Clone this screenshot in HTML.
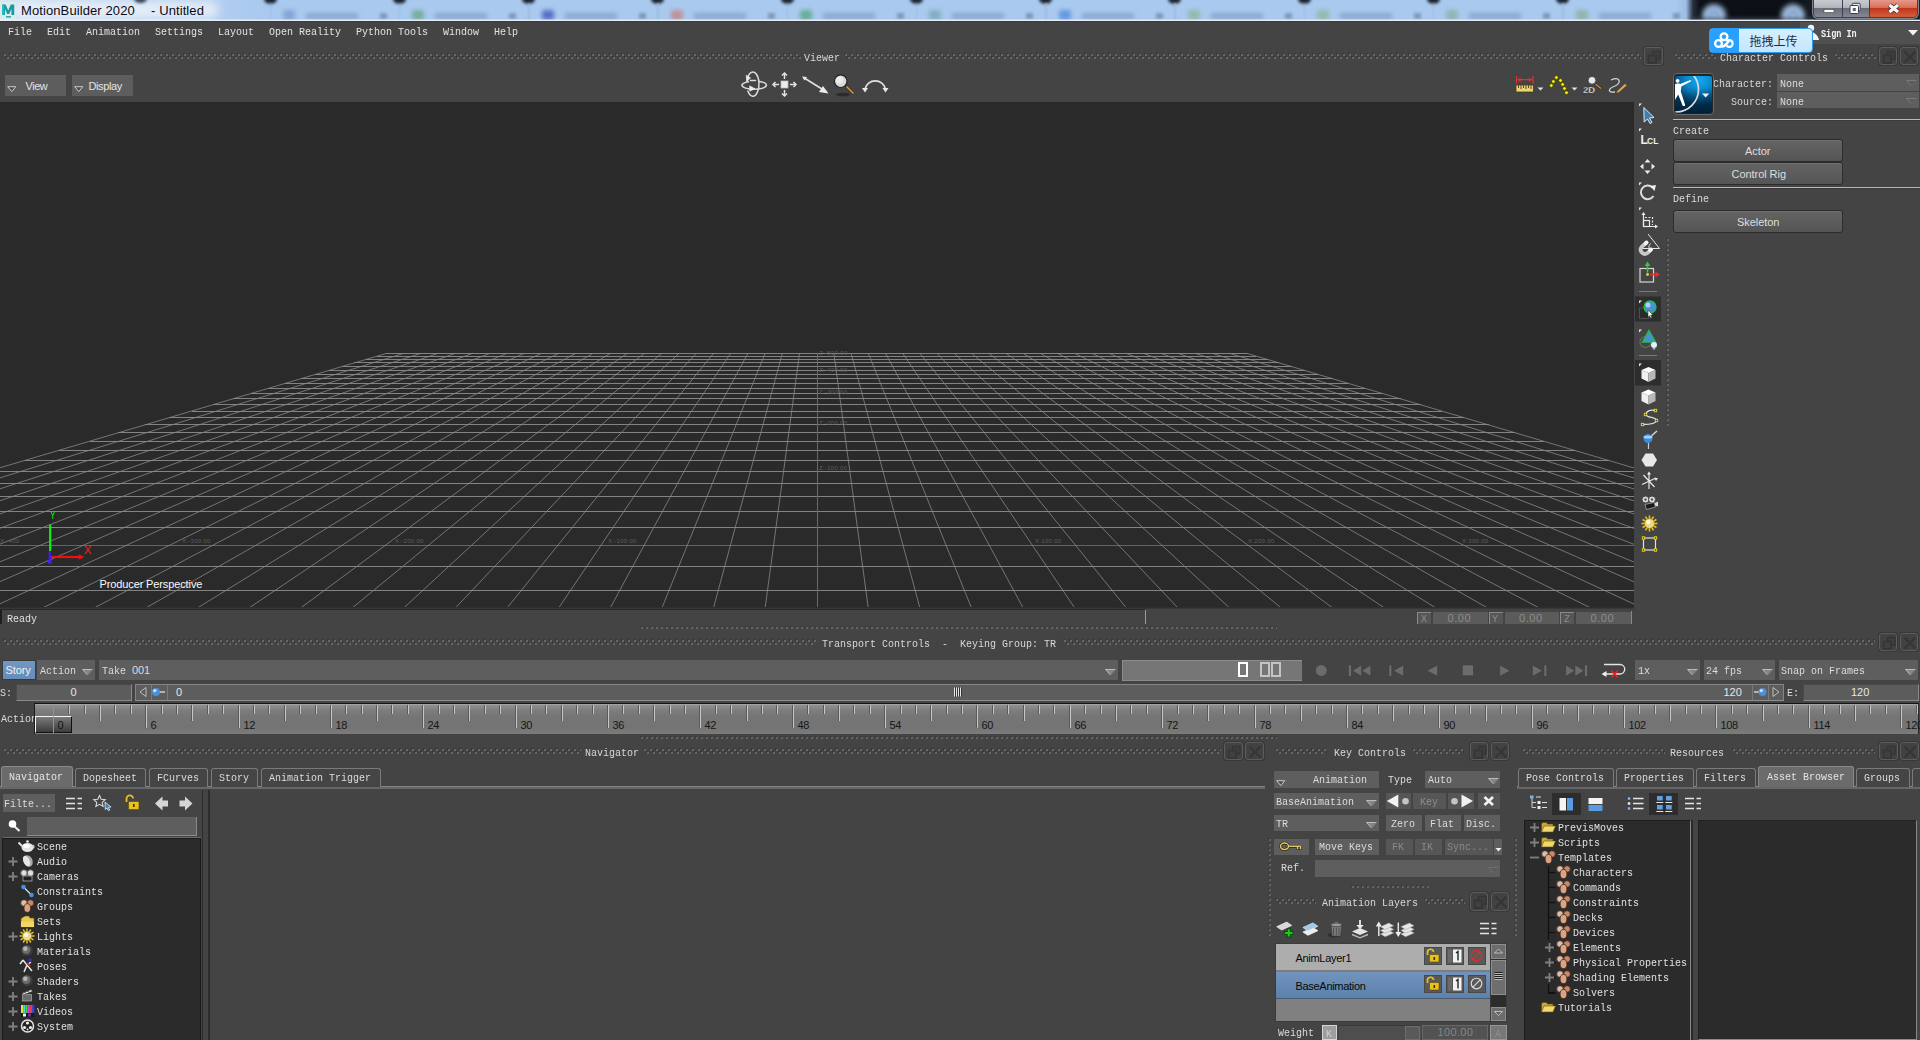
<!DOCTYPE html>
<html lang="en"><head><meta charset="utf-8"><title>MotionBuilder 2020 - Untitled</title>
<style>
html,body{margin:0;padding:0;}
body{width:1920px;height:1040px;overflow:hidden;background:#444;position:relative;font-family:"Liberation Sans","Noto Sans CJK SC",sans-serif;}
#app{position:absolute;left:0;top:0;width:1920px;height:1040px;overflow:hidden;background:#444;}
#app div,#app span,#app svg{position:absolute;box-sizing:border-box;}
.m{font-family:"Liberation Mono",monospace;font-size:11px;line-height:14px;white-space:pre;transform:scaleX(.909);transform-origin:0 0;letter-spacing:0;}
.s{font-family:"Liberation Sans",sans-serif;line-height:14px;white-space:pre;}
.pb{width:18.5px;height:18.5px;border:1px solid #5c5c5c;border-radius:3px;background:#424242;box-shadow:0 0 0 1px #383838;}
.dd{background:#5e5e5e;}
.btn{background:#5e5e5e;}
.fld{background:#5c5c5c;border:1px solid #4a4a4a;border-bottom-color:#8a8a8a;border-right-color:#8a8a8a;}
.tab{border:1px solid #7a7a7a;border-bottom:none;border-radius:3px 3px 0 0;background:#454545;}
.tabA{border:1px solid #8a8a8a;border-bottom:none;border-radius:3px 3px 0 0;background:#6b6b6b;}
.rb{border:1px solid #2c2c2c;border-radius:3px;background:linear-gradient(#646464,#555);box-shadow:inset 0 1px 0 #707070;}
</style></head><body><div id="app">
<svg width="0" height="0" style="left:0;top:0"><defs>
<pattern id="pd" width="6" height="6" patternUnits="userSpaceOnUse"><rect x="0" y="0" width="2" height="2" fill="#373737"/><rect x="1" y="1" width="2" height="2" fill="#676767"/><rect x="3" y="3" width="2" height="2" fill="#373737"/><rect x="4" y="4" width="2" height="2" fill="#676767"/></pattern>
<pattern id="ps" width="5" height="3" patternUnits="userSpaceOnUse"><rect x="0" y="0" width="2" height="2" fill="#393939"/><rect x="1" y="1" width="2" height="2" fill="#646464"/></pattern>
<pattern id="pv" width="3" height="5" patternUnits="userSpaceOnUse"><rect x="0" y="0" width="2" height="2" fill="#393939"/><rect x="1" y="1" width="2" height="2" fill="#646464"/></pattern>
</defs></svg>

<div style="left:0;top:0;width:1920px;height:21px;background:linear-gradient(90deg,#dbe6f3 0,#c4d8ef 40px,#b0cdee 225px,#a9c9ee 260px,#a9c9ee 1676px,#9dbde4 1686px,#27303c 1693px,#0d1116 1700px,#0c1016 1800px,#1c222a 1816px);overflow:hidden">
<div style="left:263.5px;top:-6px;width:13px;height:10px;background:#1c2430;border-radius:50%;filter:blur(1.500px)"></div>
<div style="left:269.5px;top:3px;width:1.500px;height:17px;background:#9dbbe0;filter:blur(.800px)"></div>
<div style="left:283px;top:10px;width:12px;height:10px;background:#7f9fd0;border-radius:3px;filter:blur(2px);opacity:.85"></div>
<div style="left:306px;top:12.500px;width:52px;height:6px;background:#86a3c8;filter:blur(2.200px);opacity:.85"></div>
<div style="left:380px;top:12.500px;width:7px;height:6px;background:#7891b4;filter:blur(1.800px);opacity:.85"></div>
<div style="left:392.75px;top:-6px;width:13px;height:10px;background:#1c2430;border-radius:50%;filter:blur(1.500px)"></div>
<div style="left:398.75px;top:3px;width:1.500px;height:17px;background:#9dbbe0;filter:blur(.800px)"></div>
<div style="left:412.25px;top:10px;width:12px;height:10px;background:#6fa890;border-radius:3px;filter:blur(2px);opacity:.85"></div>
<div style="left:435.25px;top:12.500px;width:52px;height:6px;background:#86a3c8;filter:blur(2.200px);opacity:.85"></div>
<div style="left:509.25px;top:12.500px;width:7px;height:6px;background:#7891b4;filter:blur(1.800px);opacity:.85"></div>
<div style="left:522px;top:-6px;width:13px;height:10px;background:#1c2430;border-radius:50%;filter:blur(1.500px)"></div>
<div style="left:528px;top:3px;width:1.500px;height:17px;background:#9dbbe0;filter:blur(.800px)"></div>
<div style="left:541.5px;top:10px;width:12px;height:10px;background:#4a60c0;border-radius:3px;filter:blur(2px);opacity:.85"></div>
<div style="left:564.5px;top:12.500px;width:52px;height:6px;background:#86a3c8;filter:blur(2.200px);opacity:.85"></div>
<div style="left:638.5px;top:12.500px;width:7px;height:6px;background:#7891b4;filter:blur(1.800px);opacity:.85"></div>
<div style="left:651.25px;top:-6px;width:13px;height:10px;background:#1c2430;border-radius:50%;filter:blur(1.500px)"></div>
<div style="left:657.25px;top:3px;width:1.500px;height:17px;background:#9dbbe0;filter:blur(.800px)"></div>
<div style="left:670.75px;top:10px;width:12px;height:10px;background:#c08888;border-radius:3px;filter:blur(2px);opacity:.85"></div>
<div style="left:693.75px;top:12.500px;width:52px;height:6px;background:#86a3c8;filter:blur(2.200px);opacity:.85"></div>
<div style="left:767.75px;top:12.500px;width:7px;height:6px;background:#7891b4;filter:blur(1.800px);opacity:.85"></div>
<div style="left:780.5px;top:-6px;width:13px;height:10px;background:#1c2430;border-radius:50%;filter:blur(1.500px)"></div>
<div style="left:786.5px;top:3px;width:1.500px;height:17px;background:#9dbbe0;filter:blur(.800px)"></div>
<div style="left:800px;top:10px;width:12px;height:10px;background:#5fa888;border-radius:3px;filter:blur(2px);opacity:.85"></div>
<div style="left:823px;top:12.500px;width:52px;height:6px;background:#86a3c8;filter:blur(2.200px);opacity:.85"></div>
<div style="left:897px;top:12.500px;width:7px;height:6px;background:#7891b4;filter:blur(1.800px);opacity:.85"></div>
<div style="left:909.75px;top:-6px;width:13px;height:10px;background:#1c2430;border-radius:50%;filter:blur(1.500px)"></div>
<div style="left:915.75px;top:3px;width:1.500px;height:17px;background:#9dbbe0;filter:blur(.800px)"></div>
<div style="left:929.25px;top:10px;width:12px;height:10px;background:#7fa8b8;border-radius:3px;filter:blur(2px);opacity:.85"></div>
<div style="left:952.25px;top:12.500px;width:52px;height:6px;background:#86a3c8;filter:blur(2.200px);opacity:.85"></div>
<div style="left:1026.25px;top:12.500px;width:7px;height:6px;background:#7891b4;filter:blur(1.800px);opacity:.85"></div>
<div style="left:1039px;top:-6px;width:13px;height:10px;background:#1c2430;border-radius:50%;filter:blur(1.500px)"></div>
<div style="left:1045px;top:3px;width:1.500px;height:17px;background:#9dbbe0;filter:blur(.800px)"></div>
<div style="left:1058.5px;top:10px;width:12px;height:10px;background:#5a8fe0;border-radius:3px;filter:blur(2px);opacity:.85"></div>
<div style="left:1081.5px;top:12.500px;width:52px;height:6px;background:#86a3c8;filter:blur(2.200px);opacity:.85"></div>
<div style="left:1155.5px;top:12.500px;width:7px;height:6px;background:#7891b4;filter:blur(1.800px);opacity:.85"></div>
<div style="left:1168.25px;top:-6px;width:13px;height:10px;background:#1c2430;border-radius:50%;filter:blur(1.500px)"></div>
<div style="left:1174.25px;top:3px;width:1.500px;height:17px;background:#9dbbe0;filter:blur(.800px)"></div>
<div style="left:1187.75px;top:10px;width:12px;height:10px;background:#8fb8a0;border-radius:3px;filter:blur(2px);opacity:.85"></div>
<div style="left:1210.75px;top:12.500px;width:52px;height:6px;background:#86a3c8;filter:blur(2.200px);opacity:.85"></div>
<div style="left:1284.75px;top:12.500px;width:7px;height:6px;background:#7891b4;filter:blur(1.800px);opacity:.85"></div>
<div style="left:1297.5px;top:-6px;width:13px;height:10px;background:#1c2430;border-radius:50%;filter:blur(1.500px)"></div>
<div style="left:1303.5px;top:3px;width:1.500px;height:17px;background:#9dbbe0;filter:blur(.800px)"></div>
<div style="left:1317px;top:10px;width:12px;height:10px;background:#90b8a0;border-radius:3px;filter:blur(2px);opacity:.85"></div>
<div style="left:1340px;top:12.500px;width:52px;height:6px;background:#86a3c8;filter:blur(2.200px);opacity:.85"></div>
<div style="left:1414px;top:12.500px;width:7px;height:6px;background:#7891b4;filter:blur(1.800px);opacity:.85"></div>
<div style="left:1426.75px;top:-6px;width:13px;height:10px;background:#1c2430;border-radius:50%;filter:blur(1.500px)"></div>
<div style="left:1432.75px;top:3px;width:1.500px;height:17px;background:#9dbbe0;filter:blur(.800px)"></div>
<div style="left:1446.25px;top:10px;width:12px;height:10px;background:#90b0a8;border-radius:3px;filter:blur(2px);opacity:.85"></div>
<div style="left:1469.25px;top:12.500px;width:52px;height:6px;background:#86a3c8;filter:blur(2.200px);opacity:.85"></div>
<div style="left:1543.25px;top:12.500px;width:7px;height:6px;background:#7891b4;filter:blur(1.800px);opacity:.85"></div>
<div style="left:1556px;top:-6px;width:13px;height:10px;background:#1c2430;border-radius:50%;filter:blur(1.500px)"></div>
<div style="left:1562px;top:3px;width:1.500px;height:17px;background:#9dbbe0;filter:blur(.800px)"></div>
<div style="left:1575.5px;top:10px;width:12px;height:10px;background:#8fb0a0;border-radius:3px;filter:blur(2px);opacity:.85"></div>
<div style="left:1598.5px;top:12.500px;width:52px;height:6px;background:#86a3c8;filter:blur(2.200px);opacity:.85"></div>
<div style="left:1672.5px;top:12.500px;width:7px;height:6px;background:#7891b4;filter:blur(1.800px);opacity:.85"></div>
<div style="left:14px;top:1px;width:205px;height:18px;background:#f4f7fc;border-radius:9px;filter:blur(5px);opacity:.72"></div>
<div style="left:134px;top:-6px;width:13px;height:9px;background:#3a4658;border-radius:50%;filter:blur(1.500px)"></div>
<div style="left:1702px;top:4px;width:24px;height:24px;background:#a4c4e8;border-radius:50%;filter:blur(2.500px);opacity:.92"></div>
<div style="left:1709px;top:11px;width:10px;height:10px;border:2px solid #7898c0;border-radius:50%;filter:blur(1.500px);opacity:.7"></div>
<div style="left:1780.500px;top:4px;width:24px;height:24px;background:#a4c4e8;border-radius:50%;filter:blur(2.500px);opacity:.92"></div>
<div style="left:1787.500px;top:11px;width:10px;height:10px;border:2px solid #7898c0;border-radius:50%;filter:blur(1.500px);opacity:.7"></div>
<div style="left:1690px;top:15px;width:124px;height:6px;background:linear-gradient(rgba(60,70,84,0),rgba(70,80,96,.7));"></div>
</div>
<div style="left:0px;top:19px;width:1920px;height:1px;background:rgba(255,255,255,.35);"></div>
<div style="left:0px;top:20px;width:1920px;height:1px;background:#e6eef8;"></div>
<div style="left:0px;top:21px;width:1920px;height:1px;background:#3a3a3a;"></div>
<svg style="left:0;top:2px" width="17" height="18" viewBox="0 0 17 18"><rect x="0" y="0" width="16" height="17" fill="#d9ecee"/><path d="M2.2 13V2.5H5.6L8.2 8.5L10.8 2.5H14.2V13H11.4V7L9.2 12H7.2L5 7V13Z" fill="#1b9aa2"/><path d="M2.2 13V2.5H4V13Z" fill="#2bbcc0"/><rect x="6" y="14" width="5" height="1.6" fill="#3aa7ad"/></svg>
<span class="s" style="left:21px;top:3.7px;color:#0a0a14;font-size:13px;letter-spacing:0.1px">MotionBuilder 2020</span>
<span class="s" style="left:151px;top:3.7px;color:#0a0a14;font-size:13px;letter-spacing:0.1px">- Untitled</span>
<div style="left:1813px;top:-3px;width:105px;height:21px;border:1px solid #39414c;border-radius:0 0 5px 5px;background:#566070;box-shadow:0 0 0 1px rgba(255,255,255,.45);overflow:hidden">
<div style="left:0;top:0;width:28px;height:21px;background:linear-gradient(#cdd1d6 0,#b2b7be 45%,#686e7a 50%,#8c8e9a 100%)"></div>
<div style="left:28px;top:0;width:1px;height:21px;background:#3b424c"></div>
<div style="left:29px;top:0;width:26px;height:21px;background:linear-gradient(#cdd1d6 0,#b2b7be 45%,#686e7a 50%,#8c8e9a 100%)"></div>
<div style="left:55px;top:0;width:1px;height:21px;background:#3b424c"></div>
<div style="left:56px;top:0;width:48px;height:21px;background:linear-gradient(#e8a596 0,#d8705c 45%,#c2371c 50%,#d25a3a 85%,#c8603f 100%)"></div>
</div>
<svg style="left:1813px;top:0" width="106" height="18" viewBox="0 0 106 18"><rect x="11" y="9.5" width="10" height="3" fill="#fff" stroke="#444" stroke-width=".6"/><rect x="39.200" y="3.300" width="8" height="7.500" rx="1" fill="#e8e8ec" stroke="#3a3f4c" stroke-width="1"/><rect x="37" y="5.500" width="8.500" height="8" rx="1" fill="#fafafa" stroke="#3a3f4c" stroke-width="1"/><rect x="39.800" y="8" width="3" height="3" fill="#5a6070"/><path d="M76.500 5L85 12M85 5L76.500 12" stroke="#3a2a30" stroke-width="4.800"/><path d="M76.500 5L85 12M85 5L76.500 12" stroke="#f6f6f6" stroke-width="3.200"/></svg>
<span class="m" style="left:7.7px;top:25px;color:#e2e2e2;">File</span>
<span class="m" style="left:46.7px;top:25px;color:#e2e2e2;">Edit</span>
<span class="m" style="left:85.7px;top:25px;color:#e2e2e2;">Animation</span>
<span class="m" style="left:154.7px;top:25px;color:#e2e2e2;">Settings</span>
<span class="m" style="left:217.7px;top:25px;color:#e2e2e2;">Layout</span>
<span class="m" style="left:268.7px;top:25px;color:#e2e2e2;">Open Reality</span>
<span class="m" style="left:355.7px;top:25px;color:#e2e2e2;">Python Tools</span>
<span class="m" style="left:442.7px;top:25px;color:#e2e2e2;">Window</span>
<span class="m" style="left:493.7px;top:25px;color:#e2e2e2;">Help</span>
<div style="left:1800px;top:22px;width:120px;height:22px;background:#505050;"></div>
<svg style="left:1806px;top:24px" width="14" height="18" viewBox="0 0 14 18"><circle cx="5" cy="4" r="3.2" fill="#f2f2f2"/><path d="M0 16C0 10 2 8 5 8C8 8 12 11 13 16Z" fill="#f2f2f2"/></svg>
<span class="m" style="left:1820.7px;top:27.5px;color:#f4f4f4;font-weight:bold;font-size:10px;transform:scaleX(.85)">Sign In</span>
<svg style="left:1908px;top:30px" width="10" height="6" viewBox="0 0 10 6"><path d="M0 0H10L5 5.5Z" fill="#f4f4f4"/></svg>
<svg style="left:3px;top:53px" width="799" height="6"><rect width="100%" height="6" fill="url(#pd)"/></svg>
<span class="m" style="left:803.7px;top:51px;color:#d8d8d8;">Viewer</span>
<svg style="left:844px;top:53px" width="797" height="6"><rect width="100%" height="6" fill="url(#pd)"/></svg>
<div class="pb" style="left:1644px;top:46.5px"><svg width="18" height="18" viewBox="0 0 18 18"><rect x="7.500" y="3.500" width="7.500" height="7.500" fill="#3e3e3e" stroke="#363636" stroke-width="1.600"/><rect x="3.500" y="7.500" width="7.500" height="7.500" fill="#404040" stroke="#363636" stroke-width="1.800"/></svg></div>
<div style="left:5px;top:75px;width:61px;height:21px;background:#5d5d5d;"></div>
<div style="left:72px;top:75px;width:61px;height:21px;background:#5d5d5d;"></div>
<svg style="left:7px;top:86.2px" width="10" height="7" viewBox="0 0 10 7"><path d="M0.700 0.700H8.800L4.750 5.600Z" fill="#505050" stroke="#cacaca" stroke-width="1"/></svg>
<svg style="left:74px;top:86.2px" width="10" height="7" viewBox="0 0 10 7"><path d="M0.700 0.700H8.800L4.750 5.600Z" fill="#505050" stroke="#cacaca" stroke-width="1"/></svg>
<span class="s" style="left:25.5px;top:79.36px;color:#e4e4e4;font-size:11px;letter-spacing:-0.45px">View</span>
<span class="s" style="left:88.5px;top:79.36px;color:#e4e4e4;font-size:11px;letter-spacing:-0.4px">Display</span>
<div style="left:0;top:102px;width:1634px;height:505px;background:#2a2a2a;overflow:hidden">
<svg style="left:0;top:0" width="1634" height="505" viewBox="0 102 1634 505" shape-rendering="crispEdges"><g stroke="#838383" stroke-width="1" fill="none"><path d="M386.0 353.5H1247.4"/><path d="M377.0 356.5H1256.4"/><path d="M365.8 359.5H1267.6"/><path d="M354.1 362.5H1279.3"/><path d="M341.8 366.5H1291.6"/><path d="M328.8 370.5H1304.6"/><path d="M315.0 374.5H1318.4"/><path d="M300.5 378.5H1332.9"/><path d="M285.1 383.5H1348.3"/><path d="M268.7 388.5H1364.7"/><path d="M251.3 393.5H1382.1"/><path d="M232.7 398.5H1400.7"/><path d="M212.9 404.5H1420.5"/><path d="M191.7 411.5H1441.7"/><path d="M169.0 417.5H1464.4"/><path d="M144.5 424.5H1488.9"/><path d="M118.1 432.5H1515.3"/><path d="M89.6 441.5H1543.8"/><path d="M58.6 450.5H1574.8"/><path d="M24.8 460.5H1608.6"/><path d="M-12.1 471.5H1645.5"/><path d="M-52.6 483.5H1686.0"/><path d="M-97.3 496.5H1730.7"/><path d="M-146.8 511.5H1780.2"/><path d="M-202.0 527.5H1835.4"/><path d="M-263.9 545.5H1897.3" stroke="#646464"/><path d="M-333.9 566.5H1967.3"/><path d="M-413.5 590.5H2046.9"/><path d="M386.7 353.3L-784.4 700.0" shape-rendering="geometricPrecision" stroke="#8a8a8a" stroke-width=".78"/><path d="M403.9 353.3L-720.4 700.0" shape-rendering="geometricPrecision" stroke="#8a8a8a" stroke-width=".78"/><path d="M421.1 353.3L-656.3 700.0" shape-rendering="geometricPrecision" stroke="#8a8a8a" stroke-width=".78"/><path d="M438.3 353.3L-592.3 700.0" shape-rendering="geometricPrecision" stroke="#8a8a8a" stroke-width=".78"/><path d="M455.5 353.3L-528.2 700.0" shape-rendering="geometricPrecision" stroke="#8a8a8a" stroke-width=".78"/><path d="M472.7 353.3L-464.2 700.0" shape-rendering="geometricPrecision" stroke="#8a8a8a" stroke-width=".78"/><path d="M489.9 353.3L-400.1 700.0" shape-rendering="geometricPrecision" stroke="#8a8a8a" stroke-width=".78"/><path d="M507.1 353.3L-336.1 700.0" shape-rendering="geometricPrecision" stroke="#8a8a8a" stroke-width=".78"/><path d="M524.3 353.3L-272.0 700.0" shape-rendering="geometricPrecision" stroke="#8a8a8a" stroke-width=".78"/><path d="M541.5 353.3L-208.0 700.0" shape-rendering="geometricPrecision" stroke="#8a8a8a" stroke-width=".78"/><path d="M558.7 353.3L-144.0 700.0" shape-rendering="geometricPrecision" stroke="#8a8a8a" stroke-width=".78"/><path d="M575.9 353.3L-79.9 700.0" shape-rendering="geometricPrecision" stroke="#8a8a8a" stroke-width=".78"/><path d="M593.1 353.3L-15.9 700.0" shape-rendering="geometricPrecision" stroke="#8a8a8a" stroke-width=".78"/><path d="M610.3 353.3L48.2 700.0" shape-rendering="geometricPrecision" stroke="#8a8a8a" stroke-width=".78"/><path d="M627.5 353.3L112.2 700.0" shape-rendering="geometricPrecision" stroke="#8a8a8a" stroke-width=".78"/><path d="M644.7 353.3L176.3 700.0" shape-rendering="geometricPrecision" stroke="#8a8a8a" stroke-width=".78"/><path d="M661.9 353.3L240.3 700.0" shape-rendering="geometricPrecision" stroke="#8a8a8a" stroke-width=".78"/><path d="M679.1 353.3L304.3 700.0" shape-rendering="geometricPrecision" stroke="#8a8a8a" stroke-width=".78"/><path d="M696.3 353.3L368.4 700.0" shape-rendering="geometricPrecision" stroke="#8a8a8a" stroke-width=".78"/><path d="M713.5 353.3L432.4 700.0" shape-rendering="geometricPrecision" stroke="#8a8a8a" stroke-width=".78"/><path d="M730.7 353.3L496.5 700.0" shape-rendering="geometricPrecision" stroke="#8a8a8a" stroke-width=".78"/><path d="M747.9 353.3L560.5 700.0" shape-rendering="geometricPrecision" stroke="#8a8a8a" stroke-width=".78"/><path d="M765.1 353.3L624.6 700.0" shape-rendering="geometricPrecision" stroke="#8a8a8a" stroke-width=".78"/><path d="M782.3 353.3L688.6 700.0" shape-rendering="geometricPrecision" stroke="#8a8a8a" stroke-width=".78"/><path d="M799.5 353.3L752.7 700.0" shape-rendering="geometricPrecision" stroke="#8a8a8a" stroke-width=".78"/><path d="M817.5 353.3L817.5 700.0" stroke="#6a6a6a"/><path d="M833.9 353.3L880.7 700.0" shape-rendering="geometricPrecision" stroke="#8a8a8a" stroke-width=".78"/><path d="M851.1 353.3L944.8 700.0" shape-rendering="geometricPrecision" stroke="#8a8a8a" stroke-width=".78"/><path d="M868.3 353.3L1008.8 700.0" shape-rendering="geometricPrecision" stroke="#8a8a8a" stroke-width=".78"/><path d="M885.5 353.3L1072.9 700.0" shape-rendering="geometricPrecision" stroke="#8a8a8a" stroke-width=".78"/><path d="M902.7 353.3L1136.9 700.0" shape-rendering="geometricPrecision" stroke="#8a8a8a" stroke-width=".78"/><path d="M919.9 353.3L1201.0 700.0" shape-rendering="geometricPrecision" stroke="#8a8a8a" stroke-width=".78"/><path d="M937.1 353.3L1265.0 700.0" shape-rendering="geometricPrecision" stroke="#8a8a8a" stroke-width=".78"/><path d="M954.3 353.3L1329.1 700.0" shape-rendering="geometricPrecision" stroke="#8a8a8a" stroke-width=".78"/><path d="M971.5 353.3L1393.1 700.0" shape-rendering="geometricPrecision" stroke="#8a8a8a" stroke-width=".78"/><path d="M988.7 353.3L1457.1 700.0" shape-rendering="geometricPrecision" stroke="#8a8a8a" stroke-width=".78"/><path d="M1005.9 353.3L1521.2 700.0" shape-rendering="geometricPrecision" stroke="#8a8a8a" stroke-width=".78"/><path d="M1023.1 353.3L1585.2 700.0" shape-rendering="geometricPrecision" stroke="#8a8a8a" stroke-width=".78"/><path d="M1040.3 353.3L1649.3 700.0" shape-rendering="geometricPrecision" stroke="#8a8a8a" stroke-width=".78"/><path d="M1057.5 353.3L1713.3 700.0" shape-rendering="geometricPrecision" stroke="#8a8a8a" stroke-width=".78"/><path d="M1074.7 353.3L1777.4 700.0" shape-rendering="geometricPrecision" stroke="#8a8a8a" stroke-width=".78"/><path d="M1091.9 353.3L1841.4 700.0" shape-rendering="geometricPrecision" stroke="#8a8a8a" stroke-width=".78"/><path d="M1109.1 353.3L1905.4 700.0" shape-rendering="geometricPrecision" stroke="#8a8a8a" stroke-width=".78"/><path d="M1126.3 353.3L1969.5 700.0" shape-rendering="geometricPrecision" stroke="#8a8a8a" stroke-width=".78"/><path d="M1143.5 353.3L2033.5 700.0" shape-rendering="geometricPrecision" stroke="#8a8a8a" stroke-width=".78"/><path d="M1160.7 353.3L2097.6 700.0" shape-rendering="geometricPrecision" stroke="#8a8a8a" stroke-width=".78"/><path d="M1177.9 353.3L2161.6 700.0" shape-rendering="geometricPrecision" stroke="#8a8a8a" stroke-width=".78"/><path d="M1195.1 353.3L2225.7 700.0" shape-rendering="geometricPrecision" stroke="#8a8a8a" stroke-width=".78"/><path d="M1212.3 353.3L2289.7 700.0" shape-rendering="geometricPrecision" stroke="#8a8a8a" stroke-width=".78"/><path d="M1229.5 353.3L2353.8 700.0" shape-rendering="geometricPrecision" stroke="#8a8a8a" stroke-width=".78"/><path d="M1246.7 353.3L2417.8 700.0" shape-rendering="geometricPrecision" stroke="#8a8a8a" stroke-width=".78"/></g><g shape-rendering="auto"><path d="M50.2 551V524.500" stroke="#10f010" stroke-width="2.200"/><path d="M49.700 551V562" stroke="#4818ff" stroke-width="2.200"/><rect x="48" y="560.500" width="4" height="3.200" fill="#4818ff"/><path d="M51 557H81" stroke="#f01010" stroke-width="2.200"/><path d="M83.500 557L79 555V559Z" fill="#f01010" stroke="#f01010" stroke-width="1"/></g></svg>
<span class="s" style="left:49.500px;top:406px;color:#20f020;font-size:11px;transform:scaleX(.75);transform-origin:0 0">Y</span>
<span class="s" style="left:84px;top:441px;color:#f82020;font-size:11px">X</span>
<span class="s" style="left:99.5px;top:475.36px;color:#fafafa;font-size:11px;letter-spacing:-0.12px">Producer Perspective</span>
<span class="s" style="left:819px;top:248px;color:#5e5e5e;font-size:6px;line-height:7px;letter-spacing:.3px">Z:-500.00</span>
<span class="s" style="left:819px;top:265px;color:#5e5e5e;font-size:6px;line-height:7px;letter-spacing:.3px">Z:-400.00</span>
<span class="s" style="left:819px;top:287px;color:#5e5e5e;font-size:6px;line-height:7px;letter-spacing:.3px">Z:-300.00</span>
<span class="s" style="left:819px;top:318px;color:#5e5e5e;font-size:6px;line-height:7px;letter-spacing:.3px">Z:-200.00</span>
<span class="s" style="left:819px;top:363px;color:#5e5e5e;font-size:6px;line-height:7px;letter-spacing:.3px">Z:-100.00</span>
<span class="s" style="left:182px;top:436px;color:#5e5e5e;font-size:6px;line-height:7px;letter-spacing:.3px">X:-300.00</span>
<span class="s" style="left:395px;top:436px;color:#5e5e5e;font-size:6px;line-height:7px;letter-spacing:.3px">X:-200.00</span>
<span class="s" style="left:608px;top:436px;color:#5e5e5e;font-size:6px;line-height:7px;letter-spacing:.3px">X:-100.00</span>
<span class="s" style="left:1035px;top:436px;color:#5e5e5e;font-size:6px;line-height:7px;letter-spacing:.3px">X:100.00</span>
<span class="s" style="left:1248px;top:436px;color:#5e5e5e;font-size:6px;line-height:7px;letter-spacing:.3px">X:200.00</span>
<span class="s" style="left:1462px;top:436px;color:#5e5e5e;font-size:6px;line-height:7px;letter-spacing:.3px">X:300.00</span>
<span class="s" style="left:0px;top:436px;color:#5e5e5e;font-size:6px;line-height:7px;letter-spacing:.3px">X:-400</span>
</div>
<div style="left:0px;top:607px;width:1634px;height:1px;background:#2e2e2e;"></div>
<div style="left:0px;top:608px;width:1634px;height:1px;background:#383838;"></div>
<svg style="left:730px;top:66px" width="910" height="36" viewBox="730 66 910 36">
<g fill="none" stroke="#dadada" stroke-width="1.500" stroke-linecap="round"><path d="M747.160 80A6.100 12.100 0 1 1 747.900 91"/><path d="M742 85.300A12.200 4 0 0 0 766.400 85.300"/><path d="M742 85.300A12.200 4 0 0 1 748.500 81.800"/><path d="M759.500 81.600A12.200 4 0 0 1 766.400 85.300"/><path d="M750.500 80.500h5"/></g><path d="M746.200 75.200l4.300 2.600 -3.800 4z M749.600 85.800l5.400 2.900 -5.200 2.500z" fill="#ececec" stroke="#ececec" stroke-width=".600" stroke-linejoin="round"/>
<rect x="781" y="81" width="7" height="7" fill="#ececec" stroke="#bdbdbd" stroke-width=".8"/><g stroke="#e4e4e4" stroke-width="1.5" fill="none"><path d="M784.5 79V73.5M784.5 90V95.5M779 84.5H773.5M790 84.5H795.5"/><path d="M782 75.5L784.5 73L787 75.5M782 93.5L784.5 96L787 93.5M775.5 82L773 84.5L775.5 87M793.500 82L796 84.5L793.500 87"/></g>
<path d="M803.5 77.500L826 91.500" stroke="#e0e0e0" stroke-width="1.6"/><path d="M802 76.500l5 .5 -2.500 3.500z" fill="#e8e8e8"/><path d="M828.5 93.500l-9.500 -1.500 4 -6z" fill="#ececec"/>
<ellipse cx="843" cy="94.500" rx="7" ry="1.800" fill="#2b2b2b"/><path d="M846 86L853.500 93.500" stroke="#3a2a18" stroke-width="3"/><path d="M846.5 86.500L853.500 93.500" stroke="#d9944a" stroke-width="1.700"/><circle cx="840.7" cy="81.200" r="6.300" fill="#d9d9d9" stroke="#222" stroke-width="1.200"/><circle cx="839.5" cy="80" r="3.500" fill="#ececec"/>
<path d="M865 89A10.500 10.500 0 0 1 885.500 89" fill="none" stroke="#e0e0e0" stroke-width="1.700"/><path d="M862 88h6l-3 4.500zM882.500 88h6l-3 4.500z" fill="#e8e8e8"/>
<rect x="1516" y="85" width="17.500" height="7" fill="#ecd277" stroke="#4a3c10" stroke-width=".8"/><path d="M1518.5 85v3M1521 85v4M1523.500 85v3M1526 85v4M1528.500 85v3M1531 85v4" stroke="#5a4a18" stroke-width="1"/><path d="M1516.5 76v7.500M1533 76v7.500M1518 79.700H1531.500" stroke="#e03030" stroke-width="1.300"/><path d="M1517.2 79.700l3.500 -2.300v4.600zM1532.3 79.700l-3.500 -2.300v4.600z" fill="#e03030"/>
<path d="M1537.500 87.500h6l-3 3z" fill="#e0e0e0"/><path d="M1571.500 87.500h6l-3 3z" fill="#e0e0e0"/>
<circle cx="1556.4" cy="77.5" r="1.900" fill="#f6f000" stroke="#2a2a00" stroke-width=".7"/>
<circle cx="1553.4" cy="81.5" r="1.900" fill="#f6f000" stroke="#2a2a00" stroke-width=".7"/>
<circle cx="1551.3" cy="85.5" r="1.900" fill="#f6f000" stroke="#2a2a00" stroke-width=".7"/>
<circle cx="1560.5" cy="80.5" r="1.900" fill="#f6f000" stroke="#2a2a00" stroke-width=".7"/>
<circle cx="1562.6" cy="84.4" r="1.900" fill="#f6f000" stroke="#2a2a00" stroke-width=".7"/>
<circle cx="1564.5" cy="88.5" r="1.900" fill="#f6f000" stroke="#2a2a00" stroke-width=".7"/>
<circle cx="1566.5" cy="92.7" r="1.900" fill="#f6f000" stroke="#2a2a00" stroke-width=".7"/>
<path d="M1595 83.500L1601 88.500" stroke="#3a2a18" stroke-width="2.600"/><path d="M1595.500 84L1601 88.500" stroke="#c98850" stroke-width="1.400"/><circle cx="1592" cy="80.300" r="3.900" fill="#e6e6e6" stroke="#333" stroke-width=".8"/>
<text x="1583" y="93.300" font-family="Liberation Sans, sans-serif" font-weight="bold" font-size="9.500" fill="#f4f4f4" stroke="#2a2a2a" stroke-width=".3">2D</text>
<path d="M1611 80C1620 76 1622 83 1615 86C1607 89 1608 93 1615 92" fill="none" stroke="#d4d4d4" stroke-width="1.300"/><path d="M1617 91L1625 83.500L1627 85.500L1619 92.500L1616 93.500Z" fill="#d8a860" stroke="#4a3510" stroke-width=".6"/>
</svg>
<svg style="left:1634px;top:102px" width="34" height="470" viewBox="1634 102 34 470">
<rect x="1635" y="296.500" width="26" height="25" fill="#2d2d2d"/><rect x="1635" y="360" width="26" height="25.500" fill="#2d2d2d"/>
<path d="M1639 103.5 h3 l-3 3z" fill="#e8e8e8"/>
<path d="M1639 128.5 h3 l-3 3z" fill="#e8e8e8"/>
<path d="M1639 182.5 h3 l-3 3z" fill="#e8e8e8"/>
<path d="M1639 207.5 h3 l-3 3z" fill="#e8e8e8"/>
<path d="M1639 300.5 h3 l-3 3z" fill="#e8e8e8"/>
<path d="M1639 329.5 h3 l-3 3z" fill="#e8e8e8"/>
<path d="M1639 363.5 h3 l-3 3z" fill="#e8e8e8"/>
<path d="M1643.800 107.500L1654 117.500L1649.500 118L1652 122.500L1650 123.500L1647.500 119L1644.200 122Z" fill="#3e7fb0" stroke="#dfe8f0" stroke-width="1"/>
<text x="1640.500" y="144" font-family="Liberation Sans, sans-serif" font-weight="bold" font-size="12" fill="#f0f0f0">L</text><text x="1647" y="144" font-family="Liberation Sans, sans-serif" font-weight="bold" font-size="8.500" fill="#f0f0f0">CL</text>
<path d="M1647.500 159l3 3.500h-6zM1647.500 174l3 -3.500h-6zM1640 166.500l3.500 -3v6zM1655 166.500l-3.500 -3v6z" fill="#ececec"/>
<path d="M1652.500 187.500A6.800 6.800 0 1 0 1653.500 196" fill="none" stroke="#dcdcdc" stroke-width="2"/><path d="M1650 186l6 -1 -1.500 6z" fill="#f0f0f0"/>
<g fill="none" stroke="#e8e8e8" stroke-width="1.200"><path d="M1643.500 214V226.500H1656"/><rect x="1643.500" y="220.500" width="6" height="6"/><path d="M1645 217.500h7.500v7.500" stroke-dasharray="2 1.500"/></g><path d="M1643.500 212l2 3h-4zM1658 226.500l-3 2v-4z" fill="#f0f0f0"/>
<path d="M1648 234L1659.500 248.500H1642" fill="none" stroke="#e6e6e6" stroke-width="1"/><path d="M1650.500 243.500a5 5 0 0 0 -1.500 5" fill="none" stroke="#e0e0e0" stroke-width="1"/><path d="M1646.500 242.500L1641.500 247A4.300 4.300 0 0 0 1647.500 253L1651 249.500" fill="none" stroke="#c8c8c8" stroke-width="3.800" stroke-linecap="round"/><path d="M1646.500 242.500l-1 1M1651 249.500l-1 1" stroke="#f4f4f4" stroke-width="3.800" stroke-linecap="round"/>
<rect x="1640" y="268.500" width="13.500" height="13.500" fill="none" stroke="#d6d6d6" stroke-width="1.200"/><path d="M1647.500 274V265" stroke="#2ecc40" stroke-width="1.600"/><path d="M1647.500 261.500l2.800 4.500h-5.600z" fill="#2ecc40"/><path d="M1648 274.500H1656" stroke="#e03030" stroke-width="1.600"/><path d="M1660 274.500l-4.500 2.800v-5.600z" fill="#e03030"/><rect x="1646" y="273" width="3" height="3" fill="#f4e040" stroke="#333" stroke-width=".5"/>
<path d="M1639 291.500h18M1639 355.500h18" stroke="#7a7a7a" stroke-width="1"/>
<rect x="1639.500" y="308" width="9.500" height="10.500" fill="#2a2a2a" stroke="#666" stroke-width=".6"/><circle cx="1650" cy="307" r="6" fill="#4a90d8" stroke="#20c040" stroke-width="1.300"/><circle cx="1648" cy="305" r="2.500" fill="#a8d0f8"/><path d="M1648 310l5 5 -2.300 .2 1.200 2.500 -1.200 .5 -1.200 -2.500 -1.500 1.500z" fill="#fff" stroke="#222" stroke-width=".5"/>
<circle cx="1645.500" cy="342" r="5.500" fill="none" stroke="#6a6a6a" stroke-width="1.200"/><path d="M1649 330.500L1655.500 342H1642.500Z" fill="#4a90d0" stroke="#20c040" stroke-width="1.400"/><circle cx="1654" cy="345" r="3" fill="#dff4ff"/><rect x="1652.800" y="347.500" width="2.400" height="2" fill="#bbb"/>
<path d="M1641.5 370l7 -3 7 3 -7 3z" fill="#fdfdfd"/><path d="M1641.5 370v8.500l7 3.500v-9z" fill="#f0f0f0"/><path d="M1648.5 373v9l7 -3.500v-8.500z" fill="#b8b8b8"/>
<path d="M1641.5 392.5l7 -3 7 3 -7 3z" fill="#fdfdfd"/><path d="M1641.5 392.5v8.500l7 3.500v-9z" fill="#f0f0f0"/><path d="M1648.5 395.5v9l7 -3.500v-8.500z" fill="#b8b8b8"/>
<path d="M1655.500 410.500C1650 409.500 1646 411 1646 414.500C1646 418 1657 417 1656.500 420.500C1656 424 1648 424.500 1642.500 424.500" fill="none" stroke="#e0e0e0" stroke-width="1.300"/>
<rect x="1641.3" y="423.3" width="2.400" height="2.400" fill="#333" stroke="#f0e020" stroke-width=".900"/>
<rect x="1654.3" y="409.3" width="2.400" height="2.400" fill="#333" stroke="#f0e020" stroke-width=".900"/>
<rect x="1644.3" y="413.3" width="2.400" height="2.400" fill="#333" stroke="#f0e020" stroke-width=".900"/>
<rect x="1655.3" y="419.3" width="2.400" height="2.400" fill="#333" stroke="#f0e020" stroke-width=".900"/>
<path d="M1648.500 443v6" stroke="#ccc" stroke-width="1.200"/><path d="M1650 437l7 -6" stroke="#d8d8d8" stroke-width="1.500"/><circle cx="1648" cy="438.500" r="4.500" fill="#3d8be0"/><ellipse cx="1648" cy="437" rx="4.500" ry="1.500" fill="#a8d0ff"/>
<path d="M1641.500 460l4 -6.500h7.500l4 6.500 -4 6.500h-7.500z" fill="#e8e8e8"/>
<g stroke="#e8e8e8" stroke-width="1.200"><path d="M1649 473v16M1642 484.500l14 -6.500M1643.500 475l11 12"/></g><path d="M1649 471.500l2 3h-4zM1658 478l-3.500 .2 1.500 2.800z" fill="#f4f4f4"/>
<circle cx="1645.500" cy="499.500" r="3.500" fill="#ddd" stroke="#444" stroke-width="1"/><circle cx="1652" cy="499.500" r="3.500" fill="#ddd" stroke="#444" stroke-width="1"/><circle cx="1645.500" cy="499.500" r="1.200" fill="#555"/><circle cx="1652" cy="499.500" r="1.200" fill="#555"/><path d="M1645 504.500l9 -2 1.500 4.500 -9 2.500z" fill="#1a1a1a" stroke="#ccc" stroke-width=".6"/><path d="M1655 503l3 -1.500v5l-3 -1z" fill="#ddd"/>
<g stroke="#e8c020" stroke-width="1.600"><path d="M1649.500 523.500L1657.5 523.5"/><path d="M1649.500 523.500L1656.4 527.5"/><path d="M1649.500 523.500L1653.5 530.4"/><path d="M1649.500 523.500L1649.5 531.5"/><path d="M1649.500 523.500L1645.5 530.4"/><path d="M1649.500 523.500L1642.6 527.5"/><path d="M1649.500 523.500L1641.5 523.5"/><path d="M1649.500 523.500L1642.6 519.5"/><path d="M1649.500 523.500L1645.5 516.6"/><path d="M1649.500 523.500L1649.5 515.5"/><path d="M1649.500 523.500L1653.5 516.6"/><path d="M1649.500 523.500L1656.4 519.5"/></g><circle cx="1649.500" cy="523.500" r="5" fill="#e8d890" stroke="#a08010" stroke-width=".8"/><circle cx="1648.300" cy="522" r="2.200" fill="#fff8d8"/>
<rect x="1643.500" y="538" width="12" height="12" fill="none" stroke="#e0e0e0" stroke-width="1.200"/>
<rect x="1642.3" y="536.8" width="2.400" height="2.400" fill="#333" stroke="#f0e020" stroke-width=".900"/>
<rect x="1654.3" y="536.8" width="2.400" height="2.400" fill="#333" stroke="#f0e020" stroke-width=".900"/>
<rect x="1642.3" y="548.8" width="2.400" height="2.400" fill="#333" stroke="#f0e020" stroke-width=".900"/>
<rect x="1654.3" y="548.8" width="2.400" height="2.400" fill="#333" stroke="#f0e020" stroke-width=".900"/>
</svg>
<svg style="left:1666px;top:238px" width="3" height="188"><rect width="3" height="100%" fill="url(#pv)"/></svg>
<svg style="left:1674px;top:53px" width="42" height="6"><rect width="100%" height="6" fill="url(#pd)"/></svg>
<span class="m" style="left:1719.7px;top:51px;color:#dadada;">Character Controls</span>
<svg style="left:1834px;top:53px" width="42" height="6"><rect width="100%" height="6" fill="url(#pd)"/></svg>
<div class="pb" style="left:1878.5px;top:46.5px"><svg width="18" height="18" viewBox="0 0 18 18"><rect x="7.500" y="3.500" width="7.500" height="7.500" fill="#3e3e3e" stroke="#363636" stroke-width="1.600"/><rect x="3.500" y="7.500" width="7.500" height="7.500" fill="#404040" stroke="#363636" stroke-width="1.800"/></svg></div><div class="pb" style="left:1899.5px;top:46.5px"><svg width="18" height="18" viewBox="0 0 18 18"><path d="M3.500 3.500L14.500 14.500M14.500 3.500L3.500 14.500" stroke="#363636" stroke-width="2.300"/></svg></div>
<span class="m" style="left:1712.7px;top:77px;color:#d8d8d8;">Character:</span>
<div style="left:1672.500px;top:73px;width:41px;height:42px;border-radius:4px;background:#242424;border:1px solid #686868"></div>
<div style="left:1675px;top:75.500px;width:37px;height:37.500px;border-radius:2px;background:radial-gradient(ellipse 30px 26px at 24px 4px,#12aaf2 0,#0a86c8 45%,#04588a 80%,#033f66 100%);overflow:hidden"><div style="left:0;top:0;width:37px;height:37.500px;background:linear-gradient(rgba(0,30,50,0) 30%,rgba(0,22,40,.75) 100%)"></div><svg style="left:0;top:0" width="37" height="38" viewBox="0 0 37 38"><circle cx="1" cy="13.500" r="22.500" fill="none" stroke="#dcdcdc" stroke-width="1.700"/><circle cx="2.600" cy="4.800" r="1.900" fill="#fff"/><path d="M0 8.500C1 7.300 4 7.300 5.200 8L15.500 4L16.200 5.300L6.300 10.500L5.800 15.500L10.200 29L9.800 30H7.800L3.200 18.500L0 24Z" fill="#fff"/><path d="M27 17.500h7.200l-3.600 4z" fill="#f0f0f0"/></svg></div>
<span class="m" style="left:1730.7px;top:94.5px;color:#d8d8d8;">Source:</span>
<div style="left:1776.5px;top:74px;width:142px;height:16.5px;background:#5e5e5e;"></div>
<div style="left:1776.5px;top:92px;width:142px;height:16px;background:#5e5e5e;"></div>
<span class="m" style="left:1779.7px;top:77px;color:#dcdcdc;">None</span>
<span class="m" style="left:1779.7px;top:94.5px;color:#dcdcdc;">None</span>
<svg style="left:1906px;top:80px" width="11" height="7" viewBox="0 0 11 7"><path d="M0.5 0.5H10.5L5.5 6Z" fill="#5c5c5c" stroke="#7e7e7e" stroke-width=".9"/><path d="M10.500 .5L5.500 6" stroke="#505050" stroke-width=".6"/></svg>
<svg style="left:1906px;top:98px" width="11" height="7" viewBox="0 0 11 7"><path d="M0.5 0.5H10.5L5.5 6Z" fill="#5c5c5c" stroke="#7e7e7e" stroke-width=".9"/><path d="M10.500 .5L5.500 6" stroke="#505050" stroke-width=".6"/></svg>
<div style="left:1673px;top:119px;width:247px;height:1px;background:#b8b8b8;"></div>
<div style="left:1673px;top:120px;width:247px;height:1px;background:#3a3a3a;"></div>
<div style="left:1673px;top:187px;width:247px;height:1px;background:#b8b8b8;"></div>
<div style="left:1673px;top:188px;width:247px;height:1px;background:#3a3a3a;"></div>
<span class="m" style="left:1672.7px;top:124px;color:#dcdcdc;">Create</span>
<span class="m" style="left:1672.7px;top:192px;color:#dcdcdc;">Define</span>
<div class="rb" style="left:1673px;top:139px;width:170px;height:23px"></div>
<span class="s" style="left:1745px;top:144.36px;color:#dedede;font-size:11px;letter-spacing:-0.05px">Actor</span>
<div class="rb" style="left:1673px;top:162px;width:170px;height:23px"></div>
<span class="s" style="left:1731.5px;top:167.36px;color:#dedede;font-size:11px;letter-spacing:-0.05px">Control Rig</span>
<div class="rb" style="left:1673px;top:210px;width:170px;height:23px"></div>
<span class="s" style="left:1737px;top:214.86px;color:#dedede;font-size:11px;letter-spacing:-0.05px">Skeleton</span>
<svg style="left:1666px;top:238px" width="3" height="188"><rect width="3" height="100%" fill="url(#pv)"/></svg>
<div style="left:1709px;top:28px;width:104px;height:25px;border-radius:4px;border:1px solid #2a9cf8;background:linear-gradient(#d4f0ff,#c4e6fc);overflow:hidden"><div style="left:-1px;top:-1px;width:30px;height:25px;background:#28a0ff"></div></div>
<svg style="left:1713px;top:31px" width="24" height="20" viewBox="0 0 24 20"><g fill="none" stroke="#fff" stroke-width="2.300"><circle cx="11" cy="5.800" r="3.400"/><circle cx="5.500" cy="12.500" r="3.400"/><path d="M13.500 14.500a3.400 3.400 0 1 0 0 -4"/><path d="M7.500 15.300C11 17 13.500 13 16.200 9.500"/></g></svg>
<span class="s" style="left:1749.500px;top:34.500px;font-family:'Liberation Sans','Noto Sans CJK SC',sans-serif;font-size:12px;line-height:14px;color:#2a2a3a">拖拽上传</span>
<div style="left:0px;top:609px;width:1145px;height:1px;background:#262626;"></div>
<div style="left:0px;top:610px;width:1.5px;height:14px;background:#1e1e1e;"></div>
<div style="left:1145px;top:610px;width:1px;height:14px;background:#9a9a9a;"></div>
<span class="m" style="left:6.7px;top:612px;color:#e0e0e0;">Ready</span>
<div style="left:1417px;top:611.500px;width:14px;height:12.500px;background:#565656;border-left:1px solid #8a8a8a;border-top:1px solid #8a8a8a"></div>
<span class="m" style="left:1420.7px;top:612px;color:#8c8c8c;">X</span>
<div style="left:1433px;top:611.5px;width:54.5px;height:12.5px;background:#5b5b5b;"></div>
<span class="s" style="left:1447.5px;top:611.36px;color:#8c8c8c;font-size:11px;letter-spacing:.55px">0.00</span>
<div style="left:1488.5px;top:611.500px;width:14px;height:12.500px;background:#565656;border-left:1px solid #8a8a8a;border-top:1px solid #8a8a8a"></div>
<span class="m" style="left:1492.2px;top:612px;color:#8c8c8c;">Y</span>
<div style="left:1504.5px;top:611.5px;width:54.5px;height:12.5px;background:#5b5b5b;"></div>
<span class="s" style="left:1519px;top:611.36px;color:#8c8c8c;font-size:11px;letter-spacing:.55px">0.00</span>
<div style="left:1560px;top:611.500px;width:14px;height:12.500px;background:#565656;border-left:1px solid #8a8a8a;border-top:1px solid #8a8a8a"></div>
<span class="m" style="left:1563.7px;top:612px;color:#8c8c8c;">Z</span>
<div style="left:1576px;top:611.5px;width:54.5px;height:12.5px;background:#5b5b5b;"></div>
<span class="s" style="left:1590.5px;top:611.36px;color:#8c8c8c;font-size:11px;letter-spacing:.55px">0.00</span>
<div style="left:1631px;top:611px;width:1px;height:13px;background:#8a8a8a;"></div>
<svg style="left:640px;top:625.8px" width="637" height="3"><rect width="100%" height="3" fill="url(#ps)"/></svg>
<svg style="left:3px;top:639px" width="813" height="6"><rect width="100%" height="6" fill="url(#pd)"/></svg>
<span class="m" style="left:821.7px;top:636.5px;color:#d8d8d8;">Transport Controls  -  Keying Group: TR</span>
<svg style="left:1063px;top:639px" width="812" height="6"><rect width="100%" height="6" fill="url(#pd)"/></svg>
<div class="pb" style="left:1878.5px;top:632.5px"><svg width="18" height="18" viewBox="0 0 18 18"><rect x="7.500" y="3.500" width="7.500" height="7.500" fill="#3e3e3e" stroke="#363636" stroke-width="1.600"/><rect x="3.500" y="7.500" width="7.500" height="7.500" fill="#404040" stroke="#363636" stroke-width="1.800"/></svg></div><div class="pb" style="left:1899.5px;top:632.5px"><svg width="18" height="18" viewBox="0 0 18 18"><path d="M3.500 3.500L14.500 14.500M14.500 3.500L3.500 14.500" stroke="#363636" stroke-width="2.300"/></svg></div>
<div style="left:2px;top:660px;width:34px;height:20px;background:#3a3a3a;"></div>
<div style="left:3px;top:661px;width:32px;height:18.3px;background:linear-gradient(#7096c2,#668cb8);"></div>
<span class="s" style="left:5.5px;top:663.36px;color:#f0f0f0;font-size:11px;letter-spacing:-0.1px">Story</span>
<div style="left:37px;top:660px;width:58px;height:19.7px;background:#5e5e5e;"></div>
<span class="m" style="left:39.7px;top:664px;color:#dcdcdc;">Action</span>
<svg style="left:82px;top:668.5px" width="11" height="7" viewBox="0 0 11 7"><path d="M0.5 0.5H10.5L5.5 6Z" fill="#868686" stroke="#c4c4c4" stroke-width=".9"/><path d="M10.500 .5L5.500 6" stroke="#3c3c3c" stroke-width=".6"/></svg>
<div style="left:98.5px;top:660px;width:1019.5px;height:19.7px;background:#5e5e5e;"></div>
<span class="m" style="left:101.7px;top:664px;color:#dcdcdc;">Take</span>
<span class="s" style="left:132px;top:663.36px;color:#dcdcdc;font-size:11px;letter-spacing:-0.1px">001</span>
<svg style="left:1105px;top:668.5px" width="11" height="7" viewBox="0 0 11 7"><path d="M0.5 0.5H10.5L5.5 6Z" fill="#868686" stroke="#c4c4c4" stroke-width=".9"/><path d="M10.500 .5L5.500 6" stroke="#3c3c3c" stroke-width=".6"/></svg>
<div style="left:1121.500px;top:659.500px;width:180.500px;height:21.500px;background:#767676;border-top:1px solid #8c8c8c;border-left:1px solid #8c8c8c;border-bottom:1px solid #8a8a8a"></div>
<div style="left:1238px;top:662px;width:10px;height:15px;border:2px solid #fff"></div>
<div style="left:1260px;top:662px;width:9.800px;height:15px;border:2px solid #c4c4c4"></div>
<div style="left:1271.300px;top:662px;width:9.800px;height:15px;border:2px solid #c4c4c4"></div>
<svg style="left:1310px;top:660px" width="325" height="22" viewBox="1310 660 325 22"><g fill="#6c6c6c" stroke="#3c3c3c" stroke-width=".500">
<circle cx="1321.300" cy="670.500" r="5.800"/>
<rect x="1348.500" y="665" width="2.800" height="11.300"/><path d="M1361.500 665v11.300l-9 -5.650zM1370.800 665v11.300l-9 -5.650z"/>
<rect x="1389" y="665" width="2.800" height="11.300"/><path d="M1403.500 665v11.300l-10 -5.650z"/>
<path d="M1437.500 665v11.300l-10.500 -5.650z"/>
<rect x="1462.500" y="665" width="10.800" height="10.800"/>
<path d="M1499.700 665v11.300l10.500 -5.650z"/>
<path d="M1532.500 665v11.300l10 -5.650z"/><rect x="1544" y="665" width="2.800" height="11.300"/>
<path d="M1565.800 665v11.300l9 -5.650zM1575 665v11.300l9 -5.650z"/><rect x="1584.600" y="665" width="2.800" height="11.300"/>
</g>
<path d="M1604 664.500H1620A4.700 4.700 0 0 1 1620 674H1606" fill="none" stroke="#e4e4e4" stroke-width="1.300"/><path d="M1601.500 674l5 -3v6z" fill="#f0f0f0"/><path d="M1611.300 670.500l6.500 7M1617.800 670.500l-6.500 7" stroke="#f81818" stroke-width="1.600"/>
</svg>
<div style="left:1635px;top:660px;width:65px;height:19.7px;background:#5e5e5e;"></div>
<span class="m" style="left:1638.2px;top:664px;color:#dcdcdc;">1x</span>
<svg style="left:1687px;top:668.5px" width="11" height="7" viewBox="0 0 11 7"><path d="M0.5 0.5H10.5L5.5 6Z" fill="#868686" stroke="#c4c4c4" stroke-width=".9"/><path d="M10.500 .5L5.500 6" stroke="#3c3c3c" stroke-width=".6"/></svg>
<div style="left:1703.5px;top:660px;width:71.5px;height:19.7px;background:#5e5e5e;"></div>
<span class="m" style="left:1706.2px;top:664px;color:#dcdcdc;">24 fps</span>
<svg style="left:1762px;top:668.5px" width="11" height="7" viewBox="0 0 11 7"><path d="M0.5 0.5H10.5L5.5 6Z" fill="#868686" stroke="#c4c4c4" stroke-width=".9"/><path d="M10.500 .5L5.500 6" stroke="#3c3c3c" stroke-width=".6"/></svg>
<div style="left:1778.5px;top:660px;width:139px;height:19.7px;background:#5e5e5e;"></div>
<span class="m" style="left:1781.2px;top:664px;color:#dcdcdc;">Snap on Frames</span>
<svg style="left:1905px;top:668.5px" width="11" height="7" viewBox="0 0 11 7"><path d="M0.5 0.5H10.5L5.5 6Z" fill="#868686" stroke="#c4c4c4" stroke-width=".9"/><path d="M10.500 .5L5.500 6" stroke="#3c3c3c" stroke-width=".6"/></svg>
<span class="m" style="left:0.2px;top:686px;color:#dcdcdc;">S:</span>
<div class="fld" style="left:16px;top:684px;width:115.500px;height:16.500px"></div>
<span class="s" style="left:70.5px;top:685.36px;color:#e6e6e6;font-size:11px;">0</span>
<div style="left:134.500px;top:684px;width:1649px;height:17px;background:#5d5d5d;border-top:1px solid #858585;border-left:1px solid #858585;border-bottom:1px solid #909090;border-right:1px solid #858585"></div>
<div style="left:150.5px;top:685px;width:1px;height:15px;background:#7a7a7a;"></div>
<div style="left:166.5px;top:685px;width:1px;height:15px;background:#7a7a7a;"></div>
<svg style="left:136px;top:685px" width="32" height="15" viewBox="136 685 32 15"><path d="M146 687.500v9l-6 -4.500z" fill="#5a5a5a" stroke="#bdbdbd" stroke-width="1"/><path d="M158 692h7" stroke="#d0d0d0" stroke-width="1.500"/><circle cx="156" cy="692" r="4" fill="#4c8fd8"/><circle cx="154.800" cy="690.600" r="1.700" fill="#c8e0ff"/></svg>
<span class="s" style="left:176px;top:685.36px;color:#e6e6e6;font-size:11px;">0</span>
<svg style="left:950px;top:686px" width="16" height="12" viewBox="0 0 16 12"><path d="M4.500 1.500v9M6.500 1.500v9M8.500 1.500v9M10.500 1.500v9" stroke="#e8e8e8" stroke-width="1"/><path d="M5.500 1.500v9M7.500 1.500v9M9.500 1.500v9M11.500 1.500v9" stroke="#333" stroke-width="1"/></svg>
<span class="s" style="left:1723.5px;top:685.36px;color:#e6e6e6;font-size:11px;">120</span>
<div style="left:1751.5px;top:685px;width:1px;height:15px;background:#7a7a7a;"></div>
<div style="left:1768px;top:685px;width:1px;height:15px;background:#7a7a7a;"></div>
<svg style="left:1752px;top:685px" width="32" height="15" viewBox="1752 685 32 15"><path d="M1754 692h7" stroke="#d0d0d0" stroke-width="1.500"/><circle cx="1762.500" cy="692" r="4" fill="#4c8fd8"/><circle cx="1761.300" cy="690.600" r="1.700" fill="#c8e0ff"/><path d="M1773 687.500v9l6 -4.500z" fill="#5a5a5a" stroke="#bdbdbd" stroke-width="1"/></svg>
<span class="m" style="left:1786.7px;top:686px;color:#dcdcdc;">E:</span>
<div class="fld" style="left:1803px;top:684px;width:115.500px;height:16.500px"></div>
<span class="s" style="left:1851px;top:685.36px;color:#e6e6e6;font-size:11px;">120</span>
<span class="m" style="left:0.7px;top:712px;color:#dcdcdc;width:38px;overflow:hidden">Action</span>
<div style="left:34px;top:703px;width:1884.500px;height:30.500px;background:linear-gradient(#a4a4a4 0,#a0a0a0 1px,#8e8e8e 1.500px,#7c7c7c 7px,#757575 13px,#747474 24px,#7c7c7c 100%);border-top:1.300px solid #141414;border-left:1px solid #1c1c1c;border-right:1px solid #2a2a2a"></div>
<svg style="left:35px;top:704px" width="1885" height="29" viewBox="35 704 1885 29" shape-rendering="crispEdges"><path d="M69.5 705V714" stroke="#c6c6c6"/><path d="M68.5 705V714" stroke="#5a5a5a"/><path d="M85.5 705V714" stroke="#c6c6c6"/><path d="M84.5 705V714" stroke="#5a5a5a"/><path d="M100.5 705V721" stroke="#c6c6c6"/><path d="M99.5 705V721" stroke="#5a5a5a"/><path d="M115.5 705V714" stroke="#c6c6c6"/><path d="M114.5 705V714" stroke="#5a5a5a"/><path d="M131.5 705V714" stroke="#c6c6c6"/><path d="M130.5 705V714" stroke="#5a5a5a"/><path d="M146.5 705V728" stroke="#c6c6c6"/><path d="M145.5 705V728" stroke="#5a5a5a"/><path d="M162.5 705V714" stroke="#c6c6c6"/><path d="M161.5 705V714" stroke="#5a5a5a"/><path d="M177.5 705V714" stroke="#c6c6c6"/><path d="M176.5 705V714" stroke="#5a5a5a"/><path d="M192.5 705V721" stroke="#c6c6c6"/><path d="M191.5 705V721" stroke="#5a5a5a"/><path d="M208.5 705V714" stroke="#c6c6c6"/><path d="M207.5 705V714" stroke="#5a5a5a"/><path d="M223.5 705V714" stroke="#c6c6c6"/><path d="M222.5 705V714" stroke="#5a5a5a"/><path d="M239.5 705V728" stroke="#c6c6c6"/><path d="M238.5 705V728" stroke="#5a5a5a"/><path d="M254.5 705V714" stroke="#c6c6c6"/><path d="M253.5 705V714" stroke="#5a5a5a"/><path d="M269.5 705V714" stroke="#c6c6c6"/><path d="M268.5 705V714" stroke="#5a5a5a"/><path d="M285.5 705V721" stroke="#c6c6c6"/><path d="M284.5 705V721" stroke="#5a5a5a"/><path d="M300.5 705V714" stroke="#c6c6c6"/><path d="M299.5 705V714" stroke="#5a5a5a"/><path d="M316.5 705V714" stroke="#c6c6c6"/><path d="M315.5 705V714" stroke="#5a5a5a"/><path d="M331.5 705V728" stroke="#c6c6c6"/><path d="M330.5 705V728" stroke="#5a5a5a"/><path d="M346.5 705V714" stroke="#c6c6c6"/><path d="M345.5 705V714" stroke="#5a5a5a"/><path d="M362.5 705V714" stroke="#c6c6c6"/><path d="M361.5 705V714" stroke="#5a5a5a"/><path d="M377.5 705V721" stroke="#c6c6c6"/><path d="M376.5 705V721" stroke="#5a5a5a"/><path d="M392.5 705V714" stroke="#c6c6c6"/><path d="M391.5 705V714" stroke="#5a5a5a"/><path d="M408.5 705V714" stroke="#c6c6c6"/><path d="M407.5 705V714" stroke="#5a5a5a"/><path d="M423.5 705V728" stroke="#c6c6c6"/><path d="M422.5 705V728" stroke="#5a5a5a"/><path d="M439.5 705V714" stroke="#c6c6c6"/><path d="M438.5 705V714" stroke="#5a5a5a"/><path d="M454.5 705V714" stroke="#c6c6c6"/><path d="M453.5 705V714" stroke="#5a5a5a"/><path d="M469.5 705V721" stroke="#c6c6c6"/><path d="M468.5 705V721" stroke="#5a5a5a"/><path d="M485.5 705V714" stroke="#c6c6c6"/><path d="M484.5 705V714" stroke="#5a5a5a"/><path d="M500.5 705V714" stroke="#c6c6c6"/><path d="M499.5 705V714" stroke="#5a5a5a"/><path d="M516.5 705V728" stroke="#c6c6c6"/><path d="M515.5 705V728" stroke="#5a5a5a"/><path d="M531.5 705V714" stroke="#c6c6c6"/><path d="M530.5 705V714" stroke="#5a5a5a"/><path d="M546.5 705V714" stroke="#c6c6c6"/><path d="M545.5 705V714" stroke="#5a5a5a"/><path d="M562.5 705V721" stroke="#c6c6c6"/><path d="M561.5 705V721" stroke="#5a5a5a"/><path d="M577.5 705V714" stroke="#c6c6c6"/><path d="M576.5 705V714" stroke="#5a5a5a"/><path d="M593.5 705V714" stroke="#c6c6c6"/><path d="M592.5 705V714" stroke="#5a5a5a"/><path d="M608.5 705V728" stroke="#c6c6c6"/><path d="M607.5 705V728" stroke="#5a5a5a"/><path d="M623.5 705V714" stroke="#c6c6c6"/><path d="M622.5 705V714" stroke="#5a5a5a"/><path d="M639.5 705V714" stroke="#c6c6c6"/><path d="M638.5 705V714" stroke="#5a5a5a"/><path d="M654.5 705V721" stroke="#c6c6c6"/><path d="M653.5 705V721" stroke="#5a5a5a"/><path d="M670.5 705V714" stroke="#c6c6c6"/><path d="M669.5 705V714" stroke="#5a5a5a"/><path d="M685.5 705V714" stroke="#c6c6c6"/><path d="M684.5 705V714" stroke="#5a5a5a"/><path d="M700.5 705V728" stroke="#c6c6c6"/><path d="M699.5 705V728" stroke="#5a5a5a"/><path d="M716.5 705V714" stroke="#c6c6c6"/><path d="M715.5 705V714" stroke="#5a5a5a"/><path d="M731.5 705V714" stroke="#c6c6c6"/><path d="M730.5 705V714" stroke="#5a5a5a"/><path d="M747.5 705V721" stroke="#c6c6c6"/><path d="M746.5 705V721" stroke="#5a5a5a"/><path d="M762.5 705V714" stroke="#c6c6c6"/><path d="M761.5 705V714" stroke="#5a5a5a"/><path d="M777.5 705V714" stroke="#c6c6c6"/><path d="M776.5 705V714" stroke="#5a5a5a"/><path d="M793.5 705V728" stroke="#c6c6c6"/><path d="M792.5 705V728" stroke="#5a5a5a"/><path d="M808.5 705V714" stroke="#c6c6c6"/><path d="M807.5 705V714" stroke="#5a5a5a"/><path d="M824.5 705V714" stroke="#c6c6c6"/><path d="M823.5 705V714" stroke="#5a5a5a"/><path d="M839.5 705V721" stroke="#c6c6c6"/><path d="M838.5 705V721" stroke="#5a5a5a"/><path d="M854.5 705V714" stroke="#c6c6c6"/><path d="M853.5 705V714" stroke="#5a5a5a"/><path d="M870.5 705V714" stroke="#c6c6c6"/><path d="M869.5 705V714" stroke="#5a5a5a"/><path d="M885.5 705V728" stroke="#c6c6c6"/><path d="M884.5 705V728" stroke="#5a5a5a"/><path d="M901.5 705V714" stroke="#c6c6c6"/><path d="M900.5 705V714" stroke="#5a5a5a"/><path d="M916.5 705V714" stroke="#c6c6c6"/><path d="M915.5 705V714" stroke="#5a5a5a"/><path d="M931.5 705V721" stroke="#c6c6c6"/><path d="M930.5 705V721" stroke="#5a5a5a"/><path d="M947.5 705V714" stroke="#c6c6c6"/><path d="M946.5 705V714" stroke="#5a5a5a"/><path d="M962.5 705V714" stroke="#c6c6c6"/><path d="M961.5 705V714" stroke="#5a5a5a"/><path d="M977.5 705V728" stroke="#c6c6c6"/><path d="M976.5 705V728" stroke="#5a5a5a"/><path d="M993.5 705V714" stroke="#c6c6c6"/><path d="M992.5 705V714" stroke="#5a5a5a"/><path d="M1008.5 705V714" stroke="#c6c6c6"/><path d="M1007.5 705V714" stroke="#5a5a5a"/><path d="M1024.5 705V721" stroke="#c6c6c6"/><path d="M1023.5 705V721" stroke="#5a5a5a"/><path d="M1039.5 705V714" stroke="#c6c6c6"/><path d="M1038.5 705V714" stroke="#5a5a5a"/><path d="M1054.5 705V714" stroke="#c6c6c6"/><path d="M1053.5 705V714" stroke="#5a5a5a"/><path d="M1070.5 705V728" stroke="#c6c6c6"/><path d="M1069.5 705V728" stroke="#5a5a5a"/><path d="M1085.5 705V714" stroke="#c6c6c6"/><path d="M1084.5 705V714" stroke="#5a5a5a"/><path d="M1101.5 705V714" stroke="#c6c6c6"/><path d="M1100.5 705V714" stroke="#5a5a5a"/><path d="M1116.5 705V721" stroke="#c6c6c6"/><path d="M1115.5 705V721" stroke="#5a5a5a"/><path d="M1131.5 705V714" stroke="#c6c6c6"/><path d="M1130.5 705V714" stroke="#5a5a5a"/><path d="M1147.5 705V714" stroke="#c6c6c6"/><path d="M1146.5 705V714" stroke="#5a5a5a"/><path d="M1162.5 705V728" stroke="#c6c6c6"/><path d="M1161.5 705V728" stroke="#5a5a5a"/><path d="M1178.5 705V714" stroke="#c6c6c6"/><path d="M1177.5 705V714" stroke="#5a5a5a"/><path d="M1193.5 705V714" stroke="#c6c6c6"/><path d="M1192.5 705V714" stroke="#5a5a5a"/><path d="M1208.5 705V721" stroke="#c6c6c6"/><path d="M1207.5 705V721" stroke="#5a5a5a"/><path d="M1224.5 705V714" stroke="#c6c6c6"/><path d="M1223.5 705V714" stroke="#5a5a5a"/><path d="M1239.5 705V714" stroke="#c6c6c6"/><path d="M1238.5 705V714" stroke="#5a5a5a"/><path d="M1255.5 705V728" stroke="#c6c6c6"/><path d="M1254.5 705V728" stroke="#5a5a5a"/><path d="M1270.5 705V714" stroke="#c6c6c6"/><path d="M1269.5 705V714" stroke="#5a5a5a"/><path d="M1285.5 705V714" stroke="#c6c6c6"/><path d="M1284.5 705V714" stroke="#5a5a5a"/><path d="M1301.5 705V721" stroke="#c6c6c6"/><path d="M1300.5 705V721" stroke="#5a5a5a"/><path d="M1316.5 705V714" stroke="#c6c6c6"/><path d="M1315.5 705V714" stroke="#5a5a5a"/><path d="M1332.5 705V714" stroke="#c6c6c6"/><path d="M1331.5 705V714" stroke="#5a5a5a"/><path d="M1347.5 705V728" stroke="#c6c6c6"/><path d="M1346.5 705V728" stroke="#5a5a5a"/><path d="M1362.5 705V714" stroke="#c6c6c6"/><path d="M1361.5 705V714" stroke="#5a5a5a"/><path d="M1378.5 705V714" stroke="#c6c6c6"/><path d="M1377.5 705V714" stroke="#5a5a5a"/><path d="M1393.5 705V721" stroke="#c6c6c6"/><path d="M1392.5 705V721" stroke="#5a5a5a"/><path d="M1409.5 705V714" stroke="#c6c6c6"/><path d="M1408.5 705V714" stroke="#5a5a5a"/><path d="M1424.5 705V714" stroke="#c6c6c6"/><path d="M1423.5 705V714" stroke="#5a5a5a"/><path d="M1439.5 705V728" stroke="#c6c6c6"/><path d="M1438.5 705V728" stroke="#5a5a5a"/><path d="M1455.5 705V714" stroke="#c6c6c6"/><path d="M1454.5 705V714" stroke="#5a5a5a"/><path d="M1470.5 705V714" stroke="#c6c6c6"/><path d="M1469.5 705V714" stroke="#5a5a5a"/><path d="M1486.5 705V721" stroke="#c6c6c6"/><path d="M1485.5 705V721" stroke="#5a5a5a"/><path d="M1501.5 705V714" stroke="#c6c6c6"/><path d="M1500.5 705V714" stroke="#5a5a5a"/><path d="M1516.5 705V714" stroke="#c6c6c6"/><path d="M1515.5 705V714" stroke="#5a5a5a"/><path d="M1532.5 705V728" stroke="#c6c6c6"/><path d="M1531.5 705V728" stroke="#5a5a5a"/><path d="M1547.5 705V714" stroke="#c6c6c6"/><path d="M1546.5 705V714" stroke="#5a5a5a"/><path d="M1563.5 705V714" stroke="#c6c6c6"/><path d="M1562.5 705V714" stroke="#5a5a5a"/><path d="M1578.5 705V721" stroke="#c6c6c6"/><path d="M1577.5 705V721" stroke="#5a5a5a"/><path d="M1593.5 705V714" stroke="#c6c6c6"/><path d="M1592.5 705V714" stroke="#5a5a5a"/><path d="M1609.5 705V714" stroke="#c6c6c6"/><path d="M1608.5 705V714" stroke="#5a5a5a"/><path d="M1624.5 705V728" stroke="#c6c6c6"/><path d="M1623.5 705V728" stroke="#5a5a5a"/><path d="M1639.5 705V714" stroke="#c6c6c6"/><path d="M1638.5 705V714" stroke="#5a5a5a"/><path d="M1655.5 705V714" stroke="#c6c6c6"/><path d="M1654.5 705V714" stroke="#5a5a5a"/><path d="M1670.5 705V721" stroke="#c6c6c6"/><path d="M1669.5 705V721" stroke="#5a5a5a"/><path d="M1686.5 705V714" stroke="#c6c6c6"/><path d="M1685.5 705V714" stroke="#5a5a5a"/><path d="M1701.5 705V714" stroke="#c6c6c6"/><path d="M1700.5 705V714" stroke="#5a5a5a"/><path d="M1716.5 705V728" stroke="#c6c6c6"/><path d="M1715.5 705V728" stroke="#5a5a5a"/><path d="M1732.5 705V714" stroke="#c6c6c6"/><path d="M1731.5 705V714" stroke="#5a5a5a"/><path d="M1747.5 705V714" stroke="#c6c6c6"/><path d="M1746.5 705V714" stroke="#5a5a5a"/><path d="M1763.5 705V721" stroke="#c6c6c6"/><path d="M1762.5 705V721" stroke="#5a5a5a"/><path d="M1778.5 705V714" stroke="#c6c6c6"/><path d="M1777.5 705V714" stroke="#5a5a5a"/><path d="M1793.5 705V714" stroke="#c6c6c6"/><path d="M1792.5 705V714" stroke="#5a5a5a"/><path d="M1809.5 705V728" stroke="#c6c6c6"/><path d="M1808.5 705V728" stroke="#5a5a5a"/><path d="M1824.5 705V714" stroke="#c6c6c6"/><path d="M1823.5 705V714" stroke="#5a5a5a"/><path d="M1840.5 705V714" stroke="#c6c6c6"/><path d="M1839.5 705V714" stroke="#5a5a5a"/><path d="M1855.5 705V721" stroke="#c6c6c6"/><path d="M1854.5 705V721" stroke="#5a5a5a"/><path d="M1870.5 705V714" stroke="#c6c6c6"/><path d="M1869.5 705V714" stroke="#5a5a5a"/><path d="M1886.5 705V714" stroke="#c6c6c6"/><path d="M1885.5 705V714" stroke="#5a5a5a"/><path d="M1901.5 705V728" stroke="#c6c6c6"/><path d="M1900.5 705V728" stroke="#5a5a5a"/><path d="M1917.5 705V714" stroke="#c6c6c6"/><path d="M1916.5 705V714" stroke="#5a5a5a"/></svg>
<span class="s" style="left:150.5px;top:718.36px;color:#161616;font-size:11px;letter-spacing:-0.35px">6</span>
<span class="s" style="left:243.5px;top:718.36px;color:#161616;font-size:11px;letter-spacing:-0.35px">12</span>
<span class="s" style="left:335.5px;top:718.36px;color:#161616;font-size:11px;letter-spacing:-0.35px">18</span>
<span class="s" style="left:427.5px;top:718.36px;color:#161616;font-size:11px;letter-spacing:-0.35px">24</span>
<span class="s" style="left:520.5px;top:718.36px;color:#161616;font-size:11px;letter-spacing:-0.35px">30</span>
<span class="s" style="left:612.5px;top:718.36px;color:#161616;font-size:11px;letter-spacing:-0.35px">36</span>
<span class="s" style="left:704.5px;top:718.36px;color:#161616;font-size:11px;letter-spacing:-0.35px">42</span>
<span class="s" style="left:797.5px;top:718.36px;color:#161616;font-size:11px;letter-spacing:-0.35px">48</span>
<span class="s" style="left:889.5px;top:718.36px;color:#161616;font-size:11px;letter-spacing:-0.35px">54</span>
<span class="s" style="left:981.5px;top:718.36px;color:#161616;font-size:11px;letter-spacing:-0.35px">60</span>
<span class="s" style="left:1074.5px;top:718.36px;color:#161616;font-size:11px;letter-spacing:-0.35px">66</span>
<span class="s" style="left:1166.5px;top:718.36px;color:#161616;font-size:11px;letter-spacing:-0.35px">72</span>
<span class="s" style="left:1259.5px;top:718.36px;color:#161616;font-size:11px;letter-spacing:-0.35px">78</span>
<span class="s" style="left:1351.5px;top:718.36px;color:#161616;font-size:11px;letter-spacing:-0.35px">84</span>
<span class="s" style="left:1443.5px;top:718.36px;color:#161616;font-size:11px;letter-spacing:-0.35px">90</span>
<span class="s" style="left:1536.5px;top:718.36px;color:#161616;font-size:11px;letter-spacing:-0.35px">96</span>
<span class="s" style="left:1628.5px;top:718.36px;color:#161616;font-size:11px;letter-spacing:-0.35px">102</span>
<span class="s" style="left:1720.5px;top:718.36px;color:#161616;font-size:11px;letter-spacing:-0.35px">108</span>
<span class="s" style="left:1813.5px;top:718.36px;color:#161616;font-size:11px;letter-spacing:-0.35px">114</span>
<span class="s" style="left:1905.5px;top:718.36px;color:#161616;font-size:11px;letter-spacing:-0.35px">120</span>
<div style="left:34.500px;top:716px;width:37.500px;height:17px;background:linear-gradient(#7a7a7a,#3c3c3c);border-top:1.500px solid #f4f4f4;border-left:1.500px solid #f4f4f4;border-bottom:1.500px solid #101010;border-right:1.500px solid #101010"></div>
<span class="s" style="left:57.5px;top:718.36px;color:#141414;font-size:11px;">0</span>
<div style="left:53px;top:704px;width:1.3px;height:29px;background:#10f010;"></div>
<svg style="left:3px;top:748px" width="578" height="6"><rect width="100%" height="6" fill="url(#pd)"/></svg>
<span class="m" style="left:584.7px;top:746px;color:#d8d8d8;">Navigator</span>
<svg style="left:643px;top:748px" width="578" height="6"><rect width="100%" height="6" fill="url(#pd)"/></svg>
<div class="pb" style="left:1224px;top:741.5px"><svg width="18" height="18" viewBox="0 0 18 18"><rect x="7.500" y="3.500" width="7.500" height="7.500" fill="#3e3e3e" stroke="#363636" stroke-width="1.600"/><rect x="3.500" y="7.500" width="7.500" height="7.500" fill="#404040" stroke="#363636" stroke-width="1.800"/></svg></div><div class="pb" style="left:1245px;top:741.5px"><svg width="18" height="18" viewBox="0 0 18 18"><path d="M3.500 3.500L14.500 14.500M14.500 3.500L3.500 14.500" stroke="#363636" stroke-width="2.300"/></svg></div>
<div style="left:0px;top:786px;width:1265px;height:1px;background:#828282;"></div>
<div style="left:0px;top:787px;width:1265px;height:2px;background:#676767;"></div>
<div class="tabA" style="left:1px;top:766px;width:71.500px;height:21px"></div>
<div class="tab" style="left:75px;top:768px;width:71px;height:19px"></div>
<div class="tab" style="left:149px;top:768px;width:59px;height:19px"></div>
<div class="tab" style="left:210.5px;top:768px;width:47.5px;height:19px"></div>
<div class="tab" style="left:260.5px;top:768px;width:120px;height:19px"></div>
<span class="m" style="left:9.2px;top:769.5px;color:#e4e4e4;">Navigator</span>
<span class="m" style="left:83.2px;top:770.5px;color:#dcdcdc;">Dopesheet</span>
<span class="m" style="left:157.2px;top:770.5px;color:#dcdcdc;">FCurves</span>
<span class="m" style="left:219.2px;top:770.5px;color:#dcdcdc;">Story</span>
<span class="m" style="left:269.2px;top:770.5px;color:#dcdcdc;">Animation Trigger</span>
<div style="left:3px;top:793.5px;width:52px;height:18.5px;background:#5e5e5e;"></div>
<span class="m" style="left:4.2px;top:797px;color:#dcdcdc;">Filte...</span>
<svg style="left:60px;top:792px" width="140" height="22" viewBox="60 792 140 22">
<g stroke="#e4e4e4" stroke-width="1.300"><path d="M66 798.500h9M77.500 798.500h4.500M66 803.500h9M77.500 803.500h4.500M66 808.500h9M77.500 808.500h4.500"/></g>
<path d="M99.500 795.500l1.700 3.800 4 .4 -3 2.700 .9 4 -3.600 -2.100 -3.600 2.100 .9 -4 -3 -2.700 4 -.4z" fill="none" stroke="#d8d8d8" stroke-width="1.100"/><path d="M105 802l6 5 -2.600 .3 1.300 2.800 -1.300 .6 -1.300 -2.800 -1.800 1.700z" fill="#3e7fb0" stroke="#e6eef6" stroke-width=".800"/>
<path d="M126.500 802v-3a3.300 3.300 0 0 1 6.600 -.500" fill="none" stroke="#e8c020" stroke-width="1.800"/><rect x="128.500" y="801.500" width="10.500" height="8" rx="1" fill="#e8c020" stroke="#5a4800" stroke-width=".600"/><rect x="133" y="804" width="1.600" height="3" fill="#3a3000"/>
<path d="M155 803.500l7.500 -7v4h5.500v6h-5.500v4z" fill="#d6d6d6"/><path d="M192.500 803.500l-7.500 -7v4h-5.500v6h5.500v4z" fill="#d6d6d6"/>
</svg>
<svg style="left:7px;top:818px" width="16" height="16" viewBox="0 0 16 16"><path d="M7 8l5.500 5" stroke="#f0f0f0" stroke-width="2.200"/><circle cx="5.500" cy="6" r="3.800" fill="#fff"/></svg>
<div style="left:27px;top:817px;width:169.500px;height:18.500px;background:#5e5e5e;border-right:1px solid #8a8a8a;border-bottom:1px solid #8a8a8a"></div>
<div style="left:3px;top:837px;width:198px;height:1px;background:#6a6a6a;"></div>
<div style="left:2px;top:837.500px;width:199px;height:203px;background:#2b2b2b;border:1px solid #1a1a1a"></div>
<svg style="left:3px;top:838px" width="40" height="202" viewBox="3 838 40 202">
<ellipse cx="27.500" cy="847.5" rx="6" ry="4.500" fill="#e4e4e4"/><ellipse cx="26.500" cy="846" rx="3.500" ry="2" fill="#fff"/><path d="M22 846l-3.500 -3.500" stroke="#e8e8e8" stroke-width="1.800"/><path d="M32.500 845q2.500 .5 .8 3.500" stroke="#d8d8d8" stroke-width="1.200" fill="none"/><circle cx="27.500" cy="841.5" r="1.300" fill="#f0f0f0"/>
<path d="M8.500 861.5h9M13 857v9" stroke="#808080" stroke-width="1.800"/>
<ellipse cx="28" cy="861" rx="4.500" ry="6" fill="#aaa" transform="rotate(-25 28 861)"/><ellipse cx="26.500" cy="861" rx="3" ry="5.500" fill="#e6e6e6" transform="rotate(-25 26.500 861)"/>
<path d="M8.500 876.5h9M13 872v9" stroke="#808080" stroke-width="1.800"/>
<circle cx="24" cy="873" r="3.300" fill="#ddd" stroke="#555" stroke-width="1"/><circle cx="30.500" cy="873" r="3.300" fill="#ddd" stroke="#555" stroke-width="1"/><rect x="23" y="876" width="9" height="5" fill="#222" stroke="#bbb" stroke-width=".700"/>
<path d="M23.500 887L31.500 895" stroke="#e0e0e0" stroke-width="1.300"/><circle cx="23.500" cy="887" r="2.300" fill="#4a90e0"/><circle cx="31.500" cy="895" r="2.300" fill="#4a90e0"/>
<circle cx="24" cy="903" r="3.300" fill="#d8c0b0" stroke="#4a2a1c" stroke-width=".800"/><circle cx="30.500" cy="903" r="3.300" fill="#c88a6a" stroke="#4a2a1c" stroke-width=".800"/><ellipse cx="27.300" cy="908" rx="3.300" ry="4.300" fill="#d8a484" stroke="#4a2a1c" stroke-width=".800"/>
<path d="M21 927v-8.500l4 -2.500h4l1 2h4v9z" fill="#e8c84a" stroke="#6a5210" stroke-width=".700"/><path d="M21 927h13v-5.500h-13z" fill="#f0d868"/>
<path d="M8.500 936.5h9M13 932v9" stroke="#808080" stroke-width="1.800"/>
<g stroke="#e8c020" stroke-width="1.500"><path d="M27 936L34.5 936.0"/><path d="M27 936L33.5 939.8"/><path d="M27 936L30.8 942.5"/><path d="M27 936L27.0 943.5"/><path d="M27 936L23.2 942.5"/><path d="M27 936L20.5 939.8"/><path d="M27 936L19.5 936.0"/><path d="M27 936L20.5 932.2"/><path d="M27 936L23.2 929.5"/><path d="M27 936L27.0 928.5"/><path d="M27 936L30.8 929.5"/><path d="M27 936L33.5 932.2"/></g><circle cx="27" cy="936" r="4.700" fill="#eadc98" stroke="#9a7a10" stroke-width=".700"/><circle cx="26" cy="935" r="2" fill="#fffbe0"/>
<circle cx="27" cy="950.5" r="5.800" fill="#3c3c3c"/><circle cx="26.300" cy="949.7" r="4.200" fill="#6c6c6c"/><circle cx="25.300" cy="948.7" r="2.200" fill="#b4b4b4"/>
<path d="M23 960l4 5 -3 7M27 965l5 6M27 965l4 -3M23 960l-3 4" stroke="#e8e8e8" stroke-width="1.500" fill="none"/><circle cx="30" cy="960" r="1.800" fill="#3030c0"/><path d="M27 963l3 3" stroke="#e02020" stroke-width="2"/>
<path d="M8.500 981.5h9M13 977v9" stroke="#808080" stroke-width="1.800"/>
<circle cx="27" cy="980.5" r="5.800" fill="#3c3c3c"/><circle cx="26.300" cy="979.7" r="4.200" fill="#6c6c6c"/><circle cx="25.300" cy="978.7" r="2.200" fill="#b4b4b4"/>
<path d="M8.500 996.5h9M13 992v9" stroke="#808080" stroke-width="1.800"/>
<rect x="22.500" y="994.5" width="9" height="6.500" fill="#6a6a6a" stroke="#bbb" stroke-width=".600"/><path d="M22.500 993l9 -3.500 .8 2 -9 3.500z" fill="#e8e8e8" stroke="#333" stroke-width=".600"/><path d="M24.500 992.2l1.500 1.500M27.500 991l1.500 1.500" stroke="#222" stroke-width="1"/>
<path d="M8.500 1011.5h9M13 1007v9" stroke="#808080" stroke-width="1.800"/>
<rect x="21" y="1005" width="2.200" height="8" fill="#e8e040"/><rect x="23.2" y="1005" width="2.200" height="8" fill="#40d8d8"/><rect x="25.4" y="1005" width="2.200" height="8" fill="#40d040"/><rect x="27.6" y="1005" width="2.200" height="8" fill="#e040e0"/><rect x="29.8" y="1005" width="2.200" height="8" fill="#e04040"/><rect x="32" y="1005" width="2.200" height="8" fill="#4040e0"/>
<rect x="21" y="1013" width="13.200" height="4" fill="#181818"/><rect x="23" y="1013.5" width="3" height="3" fill="#f4f4f4"/><rect x="28" y="1013.5" width="3" height="3" fill="#6030a0"/>
<path d="M8.500 1026.5h9M13 1022v9" stroke="#808080" stroke-width="1.800"/>
<circle cx="27.500" cy="1026" r="6" fill="#222" stroke="#e8e8e8" stroke-width="1.500"/><circle cx="27.500" cy="1023" r="1.600" fill="#eee"/><circle cx="24.500" cy="1027.5" r="1.600" fill="#eee"/><circle cx="30.500" cy="1027.5" r="1.600" fill="#eee"/><circle cx="27.500" cy="1029.5" r="1" fill="#eee"/>
</svg>
<span class="m" style="left:37.2px;top:840px;color:#e0e0e0;">Scene</span>
<span class="m" style="left:37.2px;top:855px;color:#e0e0e0;">Audio</span>
<span class="m" style="left:37.2px;top:870px;color:#e0e0e0;">Cameras</span>
<span class="m" style="left:37.2px;top:885px;color:#e0e0e0;">Constraints</span>
<span class="m" style="left:37.2px;top:900px;color:#e0e0e0;">Groups</span>
<span class="m" style="left:37.2px;top:915px;color:#e0e0e0;">Sets</span>
<span class="m" style="left:37.2px;top:930px;color:#e0e0e0;">Lights</span>
<span class="m" style="left:37.2px;top:945px;color:#e0e0e0;">Materials</span>
<span class="m" style="left:37.2px;top:960px;color:#e0e0e0;">Poses</span>
<span class="m" style="left:37.2px;top:975px;color:#e0e0e0;">Shaders</span>
<span class="m" style="left:37.2px;top:990px;color:#e0e0e0;">Takes</span>
<span class="m" style="left:37.2px;top:1005px;color:#e0e0e0;">Videos</span>
<span class="m" style="left:37.2px;top:1020px;color:#e0e0e0;">System</span>
<div style="left:201.5px;top:790px;width:1.5px;height:250px;background:#2c2c2c;"></div>
<div style="left:208px;top:790px;width:1.5px;height:250px;background:#2c2c2c;"></div>
<svg style="left:640px;top:735.5px" width="637" height="3"><rect width="100%" height="3" fill="url(#ps)"/></svg>
<svg style="left:1275px;top:748px" width="52" height="6"><rect width="100%" height="6" fill="url(#pd)"/></svg>
<span class="m" style="left:1334.2px;top:746px;color:#d8d8d8;">Key Controls</span>
<svg style="left:1412px;top:748px" width="52" height="6"><rect width="100%" height="6" fill="url(#pd)"/></svg>
<div class="pb" style="left:1469.5px;top:741.5px"><svg width="18" height="18" viewBox="0 0 18 18"><rect x="7.500" y="3.500" width="7.500" height="7.500" fill="#3e3e3e" stroke="#363636" stroke-width="1.600"/><rect x="3.500" y="7.500" width="7.500" height="7.500" fill="#404040" stroke="#363636" stroke-width="1.800"/></svg></div><div class="pb" style="left:1490.5px;top:741.5px"><svg width="18" height="18" viewBox="0 0 18 18"><path d="M3.500 3.500L14.500 14.500M14.500 3.500L3.500 14.500" stroke="#363636" stroke-width="2.300"/></svg></div>
<div style="left:1274px;top:771px;width:105px;height:16.5px;background:#5e5e5e;"></div>
<svg style="left:1275.8px;top:780.3px" width="10" height="7" viewBox="0 0 10 7"><path d="M0.700 0.700H8.800L4.750 5.600Z" fill="#505050" stroke="#cacaca" stroke-width="1"/></svg>
<span class="m" style="left:1312.7px;top:772.5px;color:#dcdcdc;">Animation</span>
<span class="m" style="left:1388.2px;top:772.5px;color:#dcdcdc;">Type</span>
<div style="left:1424.5px;top:771px;width:75.5px;height:16.5px;background:#5e5e5e;"></div>
<span class="m" style="left:1427.7px;top:772.5px;color:#dcdcdc;">Auto</span>
<svg style="left:1487.5px;top:777.5px" width="11" height="7" viewBox="0 0 11 7"><path d="M0.5 0.5H10.5L5.5 6Z" fill="#868686" stroke="#c4c4c4" stroke-width=".9"/><path d="M10.500 .5L5.500 6" stroke="#3c3c3c" stroke-width=".6"/></svg>
<div style="left:1274px;top:793px;width:105px;height:16px;background:#5e5e5e;"></div>
<span class="m" style="left:1276.2px;top:794.5px;color:#dcdcdc;">BaseAnimation</span>
<svg style="left:1366px;top:799.5px" width="11" height="7" viewBox="0 0 11 7"><path d="M0.5 0.5H10.5L5.5 6Z" fill="#868686" stroke="#c4c4c4" stroke-width=".9"/><path d="M10.500 .5L5.500 6" stroke="#3c3c3c" stroke-width=".6"/></svg>
<div style="left:1385.5px;top:793px;width:25px;height:16px;background:#565656;"></div>
<div style="left:1412.5px;top:793px;width:33px;height:16px;background:#565656;"></div>
<div style="left:1447.5px;top:793px;width:26.5px;height:16px;background:#565656;"></div>
<div style="left:1477.5px;top:793px;width:22.5px;height:16px;background:#565656;"></div>
<span class="m" style="left:1419.7px;top:794.5px;color:#8e8e8e;">Key</span>
<svg style="left:1385px;top:793px" width="116" height="16" viewBox="1385 793 116 16"><path d="M1398.300 794.500v13l-11.500 -6.500z" fill="#f2f2f2"/><circle cx="1405.500" cy="801.300" r="3.300" fill="#c4c4c4"/><circle cx="1454.500" cy="801.300" r="3.300" fill="#c4c4c4"/><path d="M1461.500 794.500v13l11.500 -6.500z" fill="#f2f2f2"/><path d="M1484.500 797l8.500 8M1493 797l-8.500 8" stroke="#f4f4f4" stroke-width="2.600"/></svg>
<div style="left:1274px;top:815px;width:105px;height:16px;background:#5e5e5e;"></div>
<span class="m" style="left:1276.2px;top:816.5px;color:#dcdcdc;">TR</span>
<svg style="left:1366px;top:821.5px" width="11" height="7" viewBox="0 0 11 7"><path d="M0.5 0.5H10.5L5.5 6Z" fill="#868686" stroke="#c4c4c4" stroke-width=".9"/><path d="M10.500 .5L5.500 6" stroke="#3c3c3c" stroke-width=".6"/></svg>
<div style="left:1385.5px;top:815px;width:36.5px;height:16px;background:#5e5e5e;"></div>
<span class="m" style="left:1391.2px;top:816.5px;color:#dcdcdc;">Zero</span>
<div style="left:1424.5px;top:815px;width:36.5px;height:16px;background:#5e5e5e;"></div>
<span class="m" style="left:1430.2px;top:816.5px;color:#dcdcdc;">Flat</span>
<div style="left:1464px;top:815px;width:36px;height:16px;background:#5e5e5e;"></div>
<span class="m" style="left:1466.2px;top:816.5px;color:#dcdcdc;">Disc.</span>
<div style="left:1274px;top:838.5px;width:34.5px;height:16px;background:#5e5e5e;"></div>
<svg style="left:1278px;top:841px" width="26" height="11" viewBox="0 0 26 11"><ellipse cx="6.500" cy="5.300" rx="4" ry="3.200" fill="none" stroke="#2e2608" stroke-width="2.800"/><path d="M10.500 5.300h12.500M19.500 5.300v3.500M22.500 5.300v3.500" stroke="#2e2608" stroke-width="2.800"/><ellipse cx="6.500" cy="5.300" rx="4" ry="3.200" fill="none" stroke="#dcc470" stroke-width="1.500"/><path d="M10.500 5.300h12.500M19.500 5.300v3M22.500 5.300v3" stroke="#dcc470" stroke-width="1.500"/></svg>
<div style="left:1314.5px;top:838.5px;width:64.5px;height:16px;background:#5e5e5e;"></div>
<span class="m" style="left:1319.2px;top:840px;color:#dcdcdc;">Move Keys</span>
<div style="left:1385.5px;top:838.5px;width:27px;height:16px;background:#565656;"></div>
<span class="m" style="left:1392.2px;top:840px;color:#8a8a8a;">FK</span>
<div style="left:1414.5px;top:838.5px;width:27.5px;height:16px;background:#565656;"></div>
<span class="m" style="left:1421.2px;top:840px;color:#8a8a8a;">IK</span>
<div style="left:1445px;top:838.5px;width:48px;height:16px;background:#565656;"></div>
<span class="m" style="left:1447.2px;top:840px;color:#8a8a8a;">Sync...</span>
<div style="left:1494px;top:838.5px;width:7.5px;height:16px;background:#5e5e5e;"></div>
<svg style="left:1494.500px;top:848px" width="7" height="4"><path d="M0.500 0h6l-3 3.500z" fill="#eee"/></svg>
<span class="m" style="left:1281.2px;top:860.5px;color:#dcdcdc;">Ref.</span>
<div style="left:1314.5px;top:859.5px;width:185.5px;height:17px;background:#5e5e5e;"></div>
<svg style="left:1487.5px;top:867px" width="11" height="7" viewBox="0 0 11 7"><path d="M0.5 0.5H10.5L5.5 6Z" fill="#5c5c5c" stroke="#707070" stroke-width=".9"/><path d="M10.500 .5L5.500 6" stroke="#505050" stroke-width=".6"/></svg>
<svg style="left:1350.5px;top:884.8px" width="78" height="3"><rect width="100%" height="3" fill="url(#ps)"/></svg>
<svg style="left:1267.5px;top:838px" width="3" height="98"><rect width="3" height="100%" fill="url(#pv)"/></svg>
<svg style="left:1513.5px;top:838px" width="3" height="98"><rect width="3" height="100%" fill="url(#pv)"/></svg>
<svg style="left:1275px;top:898px" width="41" height="6"><rect width="100%" height="6" fill="url(#pd)"/></svg>
<span class="m" style="left:1321.7px;top:896px;color:#d8d8d8;">Animation Layers</span>
<svg style="left:1423.5px;top:898px" width="41" height="6"><rect width="100%" height="6" fill="url(#pd)"/></svg>
<div class="pb" style="left:1469.5px;top:892px"><svg width="18" height="18" viewBox="0 0 18 18"><rect x="7.500" y="3.500" width="7.500" height="7.500" fill="#3e3e3e" stroke="#363636" stroke-width="1.600"/><rect x="3.500" y="7.500" width="7.500" height="7.500" fill="#404040" stroke="#363636" stroke-width="1.800"/></svg></div><div class="pb" style="left:1490.5px;top:892px"><svg width="18" height="18" viewBox="0 0 18 18"><path d="M3.500 3.500L14.500 14.500M14.500 3.500L3.500 14.500" stroke="#363636" stroke-width="2.300"/></svg></div>
<svg style="left:1274px;top:918px" width="228" height="24" viewBox="1274 918 228 24">
<path d="M1276.7 926.7l10 -4.600 5 3.300 -10 4.600z" fill="#d8d8d8" stroke="#f0f0f0" stroke-width=".700"/>
<path d="M1288.800 928.200v9.400M1284.100 932.900h9.400" stroke="#064a06" stroke-width="3.800"/><path d="M1288.800 929.200v7.400M1285.100 932.900h7.400" stroke="#18d018" stroke-width="2"/>
<path d="M1302.9 932l10 -4.600 5 3.300 -10 4.600z" fill="#ececec" stroke="#fafafa" stroke-width=".700"/>
<path d="M1302.9 927.5l10 -4.600 5 3.300 -10 4.600z" fill="#9cc8ea" stroke="#dcecf8" stroke-width=".700"/>
<ellipse cx="1334" cy="935" rx="6" ry="2.500" fill="#2e2e2e"/><path d="M1331.200 925.500h10.300l-.8 10.500h-8.700z" fill="#808080" stroke="#3a3a3a" stroke-width=".700"/><ellipse cx="1336.300" cy="924.800" rx="5.600" ry="1.800" fill="#9a9a9a" stroke="#3c3c3c" stroke-width=".700"/><rect x="1334.500" y="921.800" width="3.600" height="1.800" fill="#6a6a6a"/><path d="M1333.600 927.500v7.500M1336.300 927.500v7.500M1339 927.500v7.500" stroke="#444" stroke-width=".900"/>
<path d="M1352 934.500l8 3.300 8 -3.300" fill="none" stroke="#b8b8b8" stroke-width="1.400"/><path d="M1352 931.500l8 -3.500 8 3.500 -8 3.500z" fill="#e4e4e4"/><path d="M1360 920v6" stroke="#dcdcdc" stroke-width="2"/><path d="M1356.300 925h7.400l-3.700 4.300z" fill="#e8e8e8"/>
<path d="M1380.4 934l8.500 -3.800 4.800 2.800 -8.500 3.800z" fill="#e6e6e6" stroke="#9a9a9a" stroke-width=".500"/>
<path d="M1380.4 930.4l8.500 -3.800 4.800 2.800 -8.500 3.800z" fill="#e6e6e6" stroke="#9a9a9a" stroke-width=".500"/>
<path d="M1380.4 926.8l8.500 -3.800 4.800 2.800 -8.500 3.800z" fill="#e6e6e6" stroke="#9a9a9a" stroke-width=".500"/>
<path d="M1400.8 934l8.500 -3.800 4.800 2.800 -8.500 3.800z" fill="#e6e6e6" stroke="#9a9a9a" stroke-width=".500"/>
<path d="M1400.8 930.4l8.500 -3.800 4.800 2.800 -8.500 3.800z" fill="#e6e6e6" stroke="#9a9a9a" stroke-width=".500"/>
<path d="M1400.8 926.8l8.500 -3.800 4.800 2.800 -8.500 3.800z" fill="#e6e6e6" stroke="#9a9a9a" stroke-width=".500"/>
<path d="M1378.800 936v-11" stroke="#e4e4e4" stroke-width="1.500"/><path d="M1375.800 926.500h6l-3 -5z" fill="#ececec"/>
<path d="M1398.300 922.500v11" stroke="#e4e4e4" stroke-width="1.500"/><path d="M1395.300 932h6l-3 5z" fill="#ececec"/>
<g stroke="#e4e4e4" stroke-width="1.300"><path d="M1480 923.500h9M1491.500 923.500h5M1480 928.500h9M1491.500 928.500h5M1480 933.500h9M1491.500 933.500h5"/></g>
</svg>
<div style="left:1274.500px;top:943px;width:216px;height:79px;background:#808080;border:1px solid #3c3c3c"></div>
<div style="left:1275.5px;top:944px;width:214px;height:25.5px;background:#adadad;"></div>
<div style="left:1275.5px;top:969.5px;width:214px;height:2.5px;background:#7c7c7c;"></div>
<div style="left:1275.5px;top:972px;width:214px;height:26px;background:linear-gradient(#7094bd,#5c81ab);"></div>
<div style="left:1275.5px;top:998px;width:214px;height:1px;background:#4a5a70;"></div>
<span class="s" style="left:1295.5px;top:951.36px;color:#080808;font-size:11px;letter-spacing:-0.3px">AnimLayer1</span>
<span class="s" style="left:1295.5px;top:979.36px;color:#080808;font-size:11px;letter-spacing:-0.3px">BaseAnimation</span>
<div style="left:1423.5px;top:947px;width:18.5px;height:17.5px;background:#595959;border:1px solid #484848"></div>
<div style="left:1445.5px;top:947px;width:18.5px;height:17.5px;background:#595959;border:1px solid #484848"></div>
<div style="left:1467.5px;top:947px;width:18.5px;height:17.5px;background:#595959;border:1px solid #484848"></div>
<svg style="left:1423px;top:947px" width="64" height="18" viewBox="0 0 64 18">
<path d="M4.500 8V5.500a3 3 0 0 1 6 -.5" fill="none" stroke="#e8c020" stroke-width="1.700"/><rect x="6.500" y="7.500" width="9.500" height="7.500" rx="1" fill="#e8c020" stroke="#5a4800" stroke-width=".600"/><rect x="10.500" y="10" width="1.600" height="3" fill="#3a3000"/>
<rect x="25" y="2.500" width="4" height="13" fill="#6a6a6a"/><rect x="30" y="2.500" width="8.500" height="13" fill="#f4f4f4"/><path d="M33 6l2 -1.500v9" fill="none" stroke="#222" stroke-width="1.400"/>
<circle cx="53.500" cy="8.500" r="5.300" fill="none" stroke="#f02828" stroke-width="1.150"/><path d="M49.700 12.300l7.600 -7.600" stroke="#f02828" stroke-width="1.150"/>
</svg>
<div style="left:1423.5px;top:975px;width:18.5px;height:17.5px;background:#595959;border:1px solid #484848"></div>
<div style="left:1445.5px;top:975px;width:18.5px;height:17.5px;background:#595959;border:1px solid #484848"></div>
<div style="left:1467.5px;top:975px;width:18.5px;height:17.5px;background:#595959;border:1px solid #484848"></div>
<svg style="left:1423px;top:975px" width="64" height="18" viewBox="0 0 64 18">
<path d="M4.500 8V5.500a3 3 0 0 1 6 -.5" fill="none" stroke="#e8c020" stroke-width="1.700"/><rect x="6.500" y="7.500" width="9.500" height="7.500" rx="1" fill="#e8c020" stroke="#5a4800" stroke-width=".600"/><rect x="10.500" y="10" width="1.600" height="3" fill="#3a3000"/>
<rect x="25" y="2.500" width="4" height="13" fill="#6a6a6a"/><rect x="30" y="2.500" width="8.500" height="13" fill="#f4f4f4"/><path d="M33 6l2 -1.500v9" fill="none" stroke="#222" stroke-width="1.400"/>
<circle cx="53.500" cy="8.500" r="5.300" fill="none" stroke="#dcdcdc" stroke-width="1.150"/><path d="M49.700 12.300l7.600 -7.600" stroke="#dcdcdc" stroke-width="1.150"/>
</svg>
<div style="left:1490px;top:943px;width:16.500px;height:79px;background:#2c2c2c;border:1px solid #3c3c3c"></div>
<div style="left:1491px;top:944px;width:14.5px;height:14.5px;background:#6c6c6c;border:1px solid #8c8c8c"></div>
<div style="left:1491px;top:1006.5px;width:14.5px;height:14.5px;background:#6c6c6c;border:1px solid #8c8c8c"></div>
<div style="left:1491px;top:960px;width:14.5px;height:34.5px;background:#6e6e6e;border:1px solid #8e8e8e"></div>
<svg style="left:1491px;top:944px" width="15" height="78" viewBox="0 0 15 78"><path d="M3.500 9l4 -4 4 4z" fill="#606060" stroke="#c8c8c8" stroke-width=".900"/><path d="M3.500 67.500l4 4 4 -4z" fill="#606060" stroke="#c8c8c8" stroke-width=".900"/><path d="M3.500 28.500h8M3.500 30.500h8M3.500 32.500h8M3.500 34.500h8" stroke="#1c1c1c" stroke-width="1"/><path d="M3.500 29.500h8M3.500 31.500h8M3.500 33.500h8M3.500 35.500h8" stroke="#c0c0c0" stroke-width="1"/></svg>
<span class="m" style="left:1278.2px;top:1025.5px;color:#dcdcdc;">Weight</span>
<div style="left:1322px;top:1025px;width:15px;height:15px;background:#9e9e9e;border:1.500px solid #d4d4d4"></div>
<span class="m" style="left:1326.2px;top:1026.5px;color:#cfcfcf;">K</span>
<div style="left:1338.5px;top:1025px;width:82px;height:15px;background:#4e4e4e;border-top:1px solid #3a3a3a"></div>
<div style="left:1405px;top:1026px;width:15px;height:14px;background:#5a5a5a;border:1px solid #6e6e6e"></div>
<div style="left:1422px;top:1025px;width:66px;height:15px;background:#525252;border:1px solid #686868"></div>
<span class="s" style="left:1437.5px;top:1025.36px;color:#858585;font-size:11px;letter-spacing:.35px">100.00</span>
<div style="left:1490px;top:1025px;width:16.5px;height:15px;background:#787878;border:1px solid #969696"></div>
<span class="m" style="left:1495.2px;top:1026.5px;color:#8e8e8e;">A</span>
<svg style="left:1522px;top:748px" width="143" height="6"><rect width="100%" height="6" fill="url(#pd)"/></svg>
<span class="m" style="left:1670.2px;top:746px;color:#d8d8d8;">Resources</span>
<svg style="left:1732px;top:748px" width="143" height="6"><rect width="100%" height="6" fill="url(#pd)"/></svg>
<div class="pb" style="left:1879px;top:741.5px"><svg width="18" height="18" viewBox="0 0 18 18"><rect x="7.500" y="3.500" width="7.500" height="7.500" fill="#3e3e3e" stroke="#363636" stroke-width="1.600"/><rect x="3.500" y="7.500" width="7.500" height="7.500" fill="#404040" stroke="#363636" stroke-width="1.800"/></svg></div><div class="pb" style="left:1900px;top:741.5px"><svg width="18" height="18" viewBox="0 0 18 18"><path d="M3.500 3.500L14.500 14.500M14.500 3.500L3.500 14.500" stroke="#363636" stroke-width="2.300"/></svg></div>
<div style="left:1517px;top:786px;width:403px;height:1px;background:#828282;"></div>
<div style="left:1517px;top:787px;width:403px;height:2px;background:#676767;"></div>
<div class="tab" style="left:1518px;top:768px;width:96px;height:19px"></div>
<div class="tab" style="left:1615.5px;top:768px;width:78.5px;height:19px"></div>
<div class="tab" style="left:1696px;top:768px;width:59.5px;height:19px"></div>
<div class="tab" style="left:1856px;top:768px;width:53.5px;height:19px"></div>
<div class="tab" style="left:1912px;top:768px;width:12px;height:19px"></div>
<div class="tabA" style="left:1757.500px;top:765.500px;width:96.500px;height:21.500px"></div>
<span class="m" style="left:1526.2px;top:770.5px;color:#dcdcdc;">Pose Controls</span>
<span class="m" style="left:1624.2px;top:770.5px;color:#dcdcdc;">Properties</span>
<span class="m" style="left:1704.2px;top:770.5px;color:#dcdcdc;">Filters</span>
<span class="m" style="left:1864.2px;top:770.5px;color:#dcdcdc;">Groups</span>
<span class="m" style="left:1766.7px;top:769.5px;color:#e4e4e4;">Asset Browser</span>
<div style="left:1552px;top:793px;width:29px;height:21.5px;background:#2d2d2d;"></div>
<div style="left:1649px;top:793px;width:29px;height:21.5px;background:#2d2d2d;"></div>
<svg style="left:1526px;top:793px" width="180" height="22" viewBox="1526 793 180 22">
<path d="M1532 797v10.500h4M1532 802.500h4" fill="none" stroke="#d0d0d0" stroke-width="1"/><rect x="1530" y="795.500" width="3.500" height="3" fill="#7ab0e8"/><rect x="1537.500" y="801" width="3" height="3" fill="#f0f0f0"/><rect x="1537.500" y="806" width="3" height="3" fill="#f0f0f0"/><path d="M1542 802.500h5M1542 807.500h5M1536 797h5" stroke="#e0e0e0" stroke-width="1.200"/>
<rect x="1559.500" y="798" width="6.500" height="12.500" fill="#f4f4f4"/><rect x="1567" y="798" width="6" height="12.500" fill="#5a9ae0"/>
<rect x="1588.500" y="798" width="14" height="6" fill="#f4f4f4"/><rect x="1588.500" y="805" width="14" height="6" fill="#5a9ae0"/>
<g stroke="#e4e4e4" stroke-width="1.300"><path d="M1633 798.500h10.500M1633 803.500h10.500M1633 808.500h10.500"/></g><rect x="1627.500" y="797" width="3" height="3" fill="#8ab8f0" stroke="#333" stroke-width=".500"/><rect x="1627.500" y="802" width="3" height="3" fill="#f4f4f4" stroke="#333" stroke-width=".500"/><rect x="1627.500" y="807" width="3" height="3" fill="#8ab8f0" stroke="#333" stroke-width=".500"/>
<rect x="1657" y="796" width="5.700" height="4.500" fill="#62a0e0"/><rect x="1666" y="796" width="5.700" height="4.500" fill="#62a0e0"/><rect x="1657" y="805" width="5.700" height="4.500" fill="#62a0e0"/><rect x="1666" y="805" width="5.700" height="4.500" fill="#62a0e0"/><path d="M1656.300 811.500h7M1665.300 811.500h7M1656.300 802.500h7M1665.300 802.500h7" stroke="#e4e4e4" stroke-width="1"/>
<g stroke="#e4e4e4" stroke-width="1.300"><path d="M1685 798.500h9M1696.500 798.500h4.500M1685 803.500h9M1696.500 803.500h4.500M1685 808.500h9M1696.500 808.500h4.500"/></g>
</svg>
<div style="left:1524px;top:820px;width:166.500px;height:221px;background:#2b2b2b;border:1px solid #1c1c1c;border-right:1px solid #858585"></div>
<div style="left:1691px;top:820px;width:1.5px;height:220px;background:#2a2a2a;"></div>
<div style="left:1698px;top:820px;width:218.500px;height:219.500px;background:#2b2b2b;border:1px solid #222;border-right-color:#8a8a8a;border-bottom-color:#8a8a8a"></div>
<svg style="left:1524px;top:820px" width="60" height="220" viewBox="1524 820 60 220">
<path d="M1548.500 866V940M1548.500 984v9.500h7" fill="none" stroke="#111" stroke-width="1.200"/>
<path d="M1530 827.5h9M1534.5 823v9" stroke="#808080" stroke-width="1.800"/>
<path d="M1541.5 832v-8l1 -1.500h4l1 1.500h5.500v2" fill="#c8a838" stroke="#5a4510" stroke-width=".600"/><path d="M1541.5 832l2.500 -6h11.500l-2.500 6z" fill="#f0d870" stroke="#6a5210" stroke-width=".600"/>
<path d="M1530 842.5h9M1534.5 838v9" stroke="#808080" stroke-width="1.800"/>
<path d="M1541.5 847v-8l1 -1.500h4l1 1.500h5.500v2" fill="#c8a838" stroke="#5a4510" stroke-width=".600"/><path d="M1541.5 847l2.500 -6h11.500l-2.500 6z" fill="#f0d870" stroke="#6a5210" stroke-width=".600"/>
<path d="M1530 857.5h9" stroke="#808080" stroke-width="1.800"/>
<circle cx="1545" cy="854" r="3.300" fill="#d8c0b0" stroke="#4a2a1c" stroke-width=".800"/><circle cx="1552" cy="854" r="3.300" fill="#c88a6a" stroke="#4a2a1c" stroke-width=".800"/><ellipse cx="1548.5" cy="859" rx="3.400" ry="4.600" fill="#d8a484" stroke="#4a2a1c" stroke-width=".800"/>
<path d="M1548.500 872.5h7" stroke="#111" stroke-width="1.200"/>
<circle cx="1560" cy="869" r="3.300" fill="#d8c0b0" stroke="#4a2a1c" stroke-width=".800"/><circle cx="1567" cy="869" r="3.300" fill="#c88a6a" stroke="#4a2a1c" stroke-width=".800"/><ellipse cx="1563.5" cy="874" rx="3.400" ry="4.600" fill="#d8a484" stroke="#4a2a1c" stroke-width=".800"/>
<path d="M1548.500 887.5h7" stroke="#111" stroke-width="1.200"/>
<circle cx="1560" cy="884" r="3.300" fill="#d8c0b0" stroke="#4a2a1c" stroke-width=".800"/><circle cx="1567" cy="884" r="3.300" fill="#c88a6a" stroke="#4a2a1c" stroke-width=".800"/><ellipse cx="1563.5" cy="889" rx="3.400" ry="4.600" fill="#d8a484" stroke="#4a2a1c" stroke-width=".800"/>
<path d="M1548.500 902.5h7" stroke="#111" stroke-width="1.200"/>
<circle cx="1560" cy="899" r="3.300" fill="#d8c0b0" stroke="#4a2a1c" stroke-width=".800"/><circle cx="1567" cy="899" r="3.300" fill="#c88a6a" stroke="#4a2a1c" stroke-width=".800"/><ellipse cx="1563.5" cy="904" rx="3.400" ry="4.600" fill="#d8a484" stroke="#4a2a1c" stroke-width=".800"/>
<path d="M1548.500 917.5h7" stroke="#111" stroke-width="1.200"/>
<circle cx="1560" cy="914" r="3.300" fill="#d8c0b0" stroke="#4a2a1c" stroke-width=".800"/><circle cx="1567" cy="914" r="3.300" fill="#c88a6a" stroke="#4a2a1c" stroke-width=".800"/><ellipse cx="1563.5" cy="919" rx="3.400" ry="4.600" fill="#d8a484" stroke="#4a2a1c" stroke-width=".800"/>
<path d="M1548.500 932.5h7" stroke="#111" stroke-width="1.200"/>
<circle cx="1560" cy="929" r="3.300" fill="#d8c0b0" stroke="#4a2a1c" stroke-width=".800"/><circle cx="1567" cy="929" r="3.300" fill="#c88a6a" stroke="#4a2a1c" stroke-width=".800"/><ellipse cx="1563.5" cy="934" rx="3.400" ry="4.600" fill="#d8a484" stroke="#4a2a1c" stroke-width=".800"/>
<path d="M1548.500 947.5h7" stroke="#111" stroke-width="1.200"/>
<path d="M1545 947.5h9M1549.5 943v9" stroke="#808080" stroke-width="1.800"/>
<circle cx="1560" cy="944" r="3.300" fill="#d8c0b0" stroke="#4a2a1c" stroke-width=".800"/><circle cx="1567" cy="944" r="3.300" fill="#c88a6a" stroke="#4a2a1c" stroke-width=".800"/><ellipse cx="1563.5" cy="949" rx="3.400" ry="4.600" fill="#d8a484" stroke="#4a2a1c" stroke-width=".800"/>
<path d="M1548.500 962.5h7" stroke="#111" stroke-width="1.200"/>
<path d="M1545 962.5h9M1549.5 958v9" stroke="#808080" stroke-width="1.800"/>
<circle cx="1560" cy="959" r="3.300" fill="#d8c0b0" stroke="#4a2a1c" stroke-width=".800"/><circle cx="1567" cy="959" r="3.300" fill="#c88a6a" stroke="#4a2a1c" stroke-width=".800"/><ellipse cx="1563.5" cy="964" rx="3.400" ry="4.600" fill="#d8a484" stroke="#4a2a1c" stroke-width=".800"/>
<path d="M1548.500 977.5h7" stroke="#111" stroke-width="1.200"/>
<path d="M1545 977.5h9M1549.5 973v9" stroke="#808080" stroke-width="1.800"/>
<circle cx="1560" cy="974" r="3.300" fill="#d8c0b0" stroke="#4a2a1c" stroke-width=".800"/><circle cx="1567" cy="974" r="3.300" fill="#c88a6a" stroke="#4a2a1c" stroke-width=".800"/><ellipse cx="1563.5" cy="979" rx="3.400" ry="4.600" fill="#d8a484" stroke="#4a2a1c" stroke-width=".800"/>
<path d="M1548.500 992.5h7" stroke="#111" stroke-width="1.200"/>
<circle cx="1560" cy="989" r="3.300" fill="#d8c0b0" stroke="#4a2a1c" stroke-width=".800"/><circle cx="1567" cy="989" r="3.300" fill="#c88a6a" stroke="#4a2a1c" stroke-width=".800"/><ellipse cx="1563.5" cy="994" rx="3.400" ry="4.600" fill="#d8a484" stroke="#4a2a1c" stroke-width=".800"/>
<path d="M1541.5 1012v-8l1 -1.500h4l1 1.500h5.500v2" fill="#c8a838" stroke="#5a4510" stroke-width=".600"/><path d="M1541.5 1012l2.500 -6h11.500l-2.500 6z" fill="#f0d870" stroke="#6a5210" stroke-width=".600"/>
</svg>
<span class="m" style="left:1558.2px;top:821px;color:#e0e0e0;">PrevisMoves</span>
<span class="m" style="left:1558.2px;top:836px;color:#e0e0e0;">Scripts</span>
<span class="m" style="left:1558.2px;top:851px;color:#e0e0e0;">Templates</span>
<span class="m" style="left:1573.2px;top:866px;color:#e0e0e0;">Characters</span>
<span class="m" style="left:1573.2px;top:881px;color:#e0e0e0;">Commands</span>
<span class="m" style="left:1573.2px;top:896px;color:#e0e0e0;">Constraints</span>
<span class="m" style="left:1573.2px;top:911px;color:#e0e0e0;">Decks</span>
<span class="m" style="left:1573.2px;top:926px;color:#e0e0e0;">Devices</span>
<span class="m" style="left:1573.2px;top:941px;color:#e0e0e0;">Elements</span>
<span class="m" style="left:1573.2px;top:956px;color:#e0e0e0;">Physical Properties</span>
<span class="m" style="left:1573.2px;top:971px;color:#e0e0e0;">Shading Elements</span>
<span class="m" style="left:1573.2px;top:986px;color:#e0e0e0;">Solvers</span>
<span class="m" style="left:1558.2px;top:1001px;color:#e0e0e0;">Tutorials</span>
</div></body></html>
